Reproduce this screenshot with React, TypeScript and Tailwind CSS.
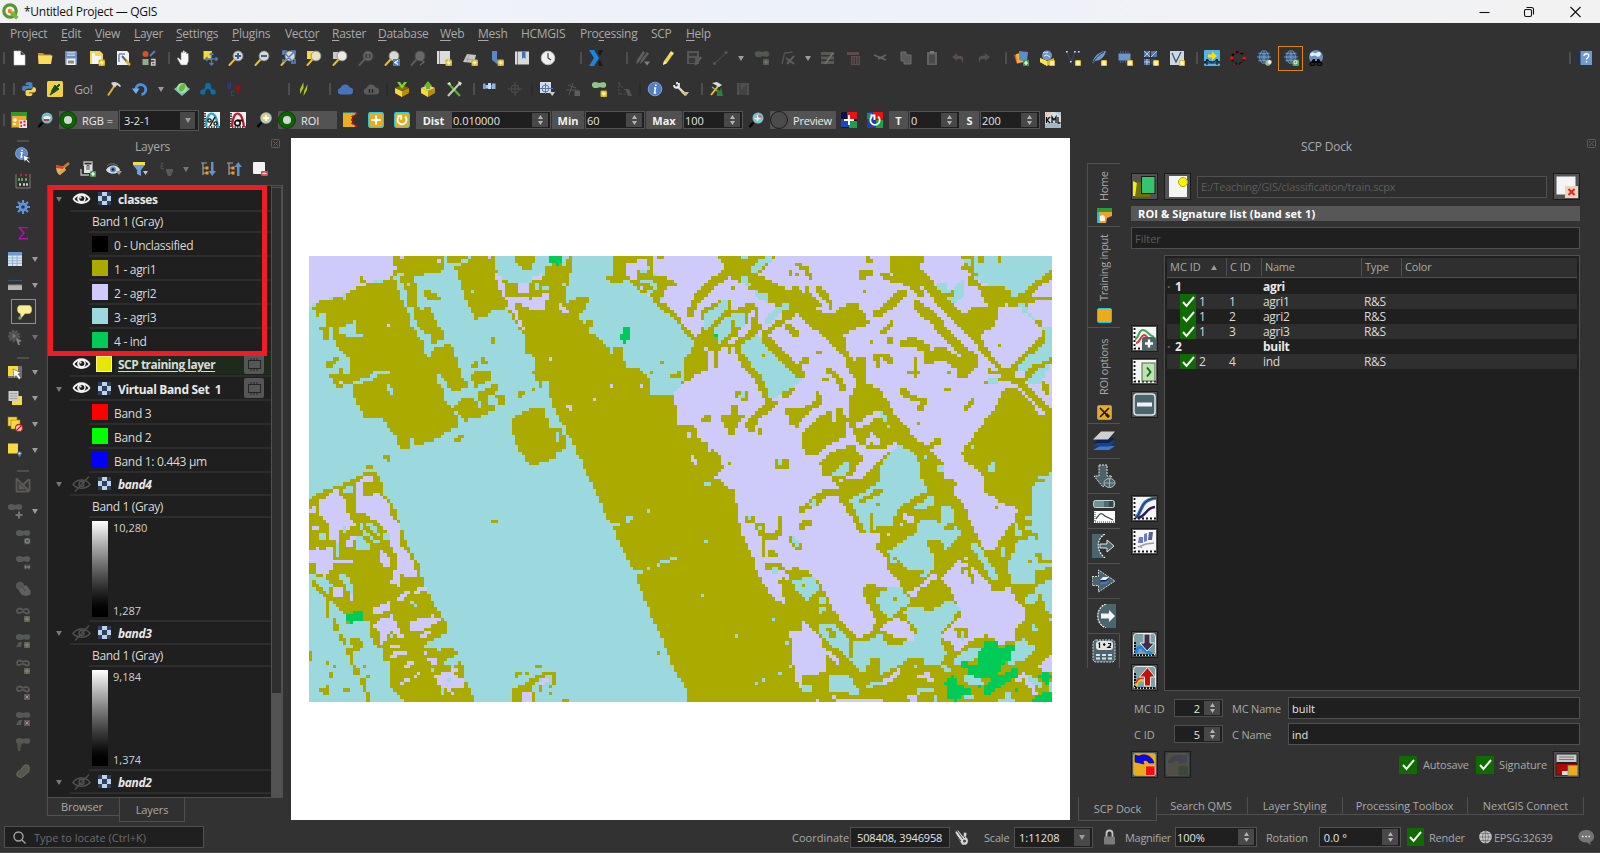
import React from 'react';

/* ------------------------------------------------------------------ */
/* Classified raster                                                   */
/* ------------------------------------------------------------------ */

type Ink = 'O' | 'L' | 'C' | 'G';
// [class, stroke width (0 = filled polygon), flat x y list]
type Shape = [Ink, number, string];
type Tile = { ox: number; oy: number; base: Ink; shapes: Shape[] };

const INK: Record<Ink, string> = { O: '#aaaa00', L: '#cecafa', C: '#9cd9df', G: '#00cb56' };
const COLS = 220;
const ROWS = 132;
const MAP_W = 743;
const MAP_H = 446;

const TILES: Tile[] = [
  {
    ox: 300, oy: 245, base: 'C',
    shapes: [
      ['L', 0, '27 33 278 33 292 70 265 103 230 103 210 115 175 125 130 150 60 165 27 190'],
      ['O', 0, '275 33 432 33 432 75 410 85 345 92 350 185 400 205 415 240 440 280 395 300 440 297 460 305 462 335 475 340 475 370 485 375 485 400 500 405 500 430 455 437 430 400 410 385 420 425 430 435 440 480 460 490 475 520 475 548 440 562 420 575 370 598 345 598 340 580 330 580 330 610 300 610 290 580 265 545 250 518 190 518 180 485 160 450 160 420 108 425 88 385 150 385 150 355 130 320 105 305 118 295 105 290 75 290 60 250 78 240 75 200 50 215 48 195 30 195 60 165 130 155 175 125 265 105 290 70'],
      ['L', 0, '302 33 312 33 312 42 302 42'],
      ['C', 0, '118 245 160 238 160 225 168 225 168 260 188 265 185 275 155 282 120 262'],
      ['C', 0, '105 345 135 330 150 350 150 385 95 380 88 365'],
      ['O', 12, '83 362 95 350 110 342'], ['O', 12, '122 372 125 385'],
      ['C', 12, '92 255 92 285'],
      ['C', 0, '280 90 308 85 300 105 312 115 325 180 340 190 350 240 375 265 390 258 395 300 435 290 435 300 400 310 390 335 372 330 370 295 335 240 325 200 300 150 290 125'],
      ['O', 10, '382 262 392 262'],
      ['C', 11, '165 413 210 400 235 382 265 382'],
      ['C', 11, '265 425 275 435 275 445'],
      ['O', 18, '378 145 395 155 418 160'], ['O', 12, '375 190 385 200'],
      ['C', 11, '325 118 325 122'],
      ['O', 0, '465 65 500 50 515 33 585 33 590 80 600 100 620 160 620 190 575 200 560 215 528 222 510 190 485 130'],
      ['O', 0, '442 33 505 33 500 52 442 52'],
      ['C', 11, '485 48 500 46'],
      ['O', 0, '598 95 630 112 690 112 735 88 740 65 815 33 815 85 805 95 798 170 815 190 835 200 840 225 855 235 870 265 890 270 920 300 930 330 945 305 970 305 970 330 980 365 1020 370 1050 400 1050 450 1140 450 1140 705 868 705 850 665 840 630 828 628 820 590 800 570 800 540 785 535 750 460 745 405 720 410 705 375 705 335 675 325 670 265 630 210 615 165'],
      ['L', 0, '583 85 600 90 615 120 620 155 690 160 745 145 735 190 690 200 690 185 650 190 655 225 665 225 672 255 660 250 640 210 620 190 620 170 595 130'],
      ['O', 12, '675 190 650 182'],
      ['O', 0, '637 33 705 33 705 50 690 72 665 68'],
      ['C', 0, '695 112 720 108 712 132'],
      ['C', 0, '722 130 748 120 740 140'],
      ['L', 0, '655 120 685 112 685 140 660 142'],
      ['L', 12, '705 100 725 90'],
      ['L', 12, '785 180 790 195 805 198'],
      ['C', 11, '792 118 792 120'], ['C', 11, '790 45 790 62'],
      ['G', 0, '748 33 787 33 785 45 770 62 748 52'],
      ['O', 0, '830 155 865 155 860 195 840 205 800 180'],
      ['O', 16, '870 232 860 240'],
      ['O', 0, '935 33 1060 33 1060 90 1130 120 1110 130 1080 160 1140 215 1140 240 1060 170 980 105 945 120 920 100 940 90'],
      ['L', 0, '980 55 1040 42 1035 70 1010 80 1015 110 980 95'],
      ['L', 0, '1060 33 1140 33 1140 215 1085 170 1090 135 1130 120 1060 80'],
      ['O', 12, '1080 40 1085 40'], ['O', 12, '1065 110 1080 95 1130 118'],
      ['C', 11, '1030 112 1065 115'], ['C', 11, '1030 80 1045 70'], ['C', 11, '1020 145 1060 170'], ['C', 11, '1045 142 1070 130'],
      ['L', 10, '1022 128 1024 128'], ['L', 10, '1045 145 1050 150'],
      ['G', 0, '976 246 990 246 990 275 978 296 968 292 960 270'],
      ['O', 12, '578 280 578 292'],
      ['O', 0, '515 385 560 373 573 380 570 408 525 427 513 400'],
      ['O', 12, '548 342 555 352'], ['O', 12, '520 362 530 354'],
      ['O', 0, '535 440 590 418 594 435 560 455 570 480 585 480 583 497 540 515 495 528 485 515 460 490 490 460 515 452 535 480'],
      ['C', 11, '538 475 538 485'],
      ['O', 0, '588 452 612 452 616 478 597 478'],
      ['O', 14, '660 450 668 443'], ['O', 14, '470 583 485 576'],
      ['O', 11, '255 635 265 637 265 645'], ['O', 11, '203 665 213 665'],
      ['O', 0, '160 705 175 692 195 682 232 682 240 705'],
      ['L', 11, '190 703 210 698 220 703'],
      ['O', 11, '702 382 712 395 722 405 722 422'], ['O', 11, '700 433 701 433'],
      ['O', 0, '638 520 690 490 735 490 748 545 785 550 785 570 797 575 797 605 770 625 760 640 730 655 690 660 665 625 645 595 638 560'],
      ['C', 10, '772 565 772 588'],
      ['L', 10, '265 241 266 241'], ['L', 10, '752 342 753 342'], ['L', 10, '934 423 935 423'], ['L', 10, '1025 423 1026 423'],
      ['L', 10, '883 463 884 463'], ['L', 10, '803 485 812 490'], ['L', 10, '123 412 124 412'], ['L', 10, '416 47 417 47'], ['L', 10, '568 37 569 37'],
      ['C', 10, '133 160 134 160'], ['C', 10, '517 140 518 140'],
      ['O', 12, '1085 352 1087 352'], ['O', 10, '1054 382 1055 382'],
      ['C', 0, '1050 395 1140 395 1140 430 1110 435 1110 450 1085 450 1075 440 1070 450 1050 450'],
      ['O', 14, '1120 393 1140 387'],
      ['L', 0, '1110 468 1125 465 1120 435 1140 430 1140 538 1132 538 1130 485'],
      ['O', 12, '180 95 190 108'],
    ],
  },
  {
    ox: 680, oy: 245, base: 'L',
    shapes: [
      ['O', 0, '115 33 285 33 235 90 310 125 400 185 445 210 500 180 530 175 555 205 568 235 490 270 505 320 520 345 555 335 555 415 600 430 640 500 680 545 700 575 750 610 790 660 790 705 725 705 715 650 660 600 600 615 540 600 505 540 505 470 520 430 535 410 510 380 490 330 450 290 400 250 350 200 310 215 290 185 230 145 190 115 130 85 135 70'],
      ['C', 12, '185 40 200 40'], ['C', 16, '222 75 245 55 265 45'], ['C', 12, '190 100 205 118'],
      ['O', 22, '135 85 60 150 30 200'],
      ['O', 0, '0 235 40 265 75 300 85 370 40 395 0 425'],
      ['C', 0, '0 250 40 285 38 310 10 350 15 400 0 410'],
      ['O', 0, '60 200 120 165 150 165 152 200 200 175 240 185 235 240 150 310 80 315 45 265 70 240'],
      ['C', 0, '75 210 125 168 145 168 152 260 120 295 105 270 75 250'],
      ['O', 13, '85 265 105 240 130 215 148 200'], ['C', 0, '155 210 190 203 195 240 165 245'],
      ['O', 14, '108 320 105 360'], ['O', 12, '148 310 148 320'],
      ['L', 11, '215 205 205 245 175 275 150 292'], ['L', 11, '50 215 60 260'],
      ['G', 11, '107 271 108 271'],
      ['C', 0, '225 138 270 152 265 172 235 165'], ['C', 16, '262 225 290 200 320 182'],
      ['O', 14, '255 265 340 205'],
      ['C', 0, '185 300 230 258 250 290 300 330 370 400 315 450 270 460 240 405 190 340'],
      ['O', 18, '172 315 185 340 240 410 265 470'], ['O', 18, '250 275 300 325 365 390'], ['O', 14, '175 300 235 247'],
      ['O', 13, '340 430 310 452'], ['O', 10, '250 330 251 330'], ['O', 14, '380 345 345 370'],
      ['O', 14, '320 240 350 270'],
      ['O', 13, '350 58 380 70 390 100'], ['O', 12, '330 80 330 92'], ['O', 12, '352 88 353 88'],
      ['O', 14, '345 135 375 165 400 190'], ['O', 14, '410 130 435 150 455 185'], ['O', 14, '380 150 420 182'], ['O', 12, '380 128 381 140'],
      ['O', 11, '158 128 159 128'], ['O', 11, '412 322 422 322'], ['O', 11, '554 138 555 138'], ['O', 11, '573 290 574 290'],
      ['O', 18, '545 95 550 85 575 80'], ['O', 12, '562 42 572 48'],
      ['O', 18, '605 88 640 103 690 115 720 145'],
      ['O', 0, '630 33 730 33 720 75 740 110 700 130 650 100 630 80'],
      ['O', 20, '670 140 640 170 590 210'],
      ['O', 25, '720 90 770 150 830 215 870 250 910 300 960 360 985 390'],
      ['O', 24, '710 180 760 220 800 270 850 320 885 345 845 385'],
      ['O', 24, '670 295 700 290 735 310'], ['O', 28, '750 340 780 320 830 352 870 360'],
      ['O', 11, '705 340 705 390'], ['O', 11, '685 382 715 382'],
      ['O', 18, '587 335 610 332 632 345'], ['O', 12, '593 350 593 365'], ['O', 12, '602 262 622 250 635 235'], ['O', 20, '628 286 630 286'],
      ['O', 10, '802 382 812 382'], ['O', 10, '802 38 808 38'],
      ['O', 0, '845 33 890 33 870 80 900 120 980 130 1000 165 955 190 945 240 900 270 840 240 860 200 895 180 870 150'],
      ['L', 0, '735 33 845 33 850 70 870 90 860 110 780 100 735 80'],
      ['C', 0, '852 45 900 33 1116 33 1116 75 1030 150 990 165 975 130 930 120 880 100'],
      ['O', 13, '875 40 880 65'], ['O', 12, '850 65 885 85'], ['O', 13, '960 38 960 50'], ['O', 13, '903 40 904 48'],
      ['L', 0, '862 120 900 130 920 180 895 180 865 160'],
      ['O', 16, '1116 85 1035 150 990 170'], ['O', 22, '915 145 985 150'],
      ['O', 18, '980 170 1030 175 1045 215 1080 245'],
      ['C', 14, '1025 180 1060 235'],
      ['C', 0, '770 120 795 115 810 135 850 105 855 145 830 180 790 155'],
      ['O', 12, '800 150 820 145'], ['O', 14, '1045 165 1116 158'],
      ['L', 0, '905 270 945 240 960 200 1010 185 1090 250 1080 290 1000 370 970 370 910 300'],
      ['O', 10, '958 300 959 300'],
      ['C', 0, '1090 250 1116 250 1116 340 1080 420 1040 420 1060 380 1000 370 1080 300'],
      ['O', 14, '1092 262 1085 290 1030 335 975 400'], ['O', 14, '1116 345 1060 370 1030 410'],
      ['O', 17, '985 390 1040 430 1116 515'], ['O', 15, '930 380 985 385'], ['O', 14, '1090 410 1100 445'], ['O', 14, '925 410 960 400'], ['C', 14, '935 408 948 408'],
      ['O', 0, '975 430 1010 430 1060 480 1075 510 1116 520 1116 705 920 705 850 640 845 620 920 520 950 480'],
      ['C', 18, '932 672 938 662'], ['C', 10, '877 605 878 605'], ['C', 14, '1085 700 1116 690'],
      ['O', 0, '520 600 548 640 520 690 480 705 430 690 420 650 450 620'],
      ['O', 0, '540 705 600 645 660 595 720 650 725 705'],
      ['C', 0, '600 705 605 650 650 602 690 610 720 660 715 705'],
      ['C', 0, '490 655 507 652 505 680 485 697 455 690'],
      ['O', 0, '365 570 385 540 450 495 480 490 505 520 495 575 440 605 415 628 378 628 368 600'],
      ['L', 12, '462 500 465 525'],
      ['C', 11, '735 635 736 635'], ['C', 16, '780 665 785 670'], ['C', 10, '604 503 614 523'], ['C', 10, '626 545 627 545'],
      ['O', 14, '445 375 470 395 490 430'], ['O', 11, '430 405 440 402'],
      ['O', 16, '412 445 420 475 385 490'], ['O', 0, '315 490 370 490 385 505 350 548 330 540'],
      ['O', 0, '190 535 230 495 275 465 300 475 240 520 215 565'], ['O', 12, '240 560 240 562'],
      ['O', 16, '165 490 165 500'], ['O', 0, '120 515 200 505 180 530 160 570 145 565'], ['O', 16, '72 525 85 515'],
      ['O', 28, '175 448 188 450'], ['C', 14, '182 455 190 445'],
      ['O', 0, '0 545 35 535 50 550 50 575 85 600 125 640 130 670 95 700 0 705'],
      ['L', 11, '35 632 48 655'], ['L', 12, '85 608 86 612'], ['O', 10, '148 655 149 655'], ['L', 11, '25 570 30 576'],
      ['O', 34, '305 656 308 656'], ['C', 12, '300 645 300 655'],
      ['O', 15, '665 435 700 460 735 470 715 495'], ['O', 10, '795 432 810 432'], ['O', 11, '878 465 857 490'],
      ['O', 13, '780 582 752 605'], ['O', 10, '715 535 716 535'],
      ['L', 16, '535 545 565 522 590 508'], ['L', 13, '562 595 575 570 590 590'], ['L', 13, '555 650 600 625 645 600'], ['L', 12, '515 575 525 595'],
    ],
  },
  {
    ox: 300, oy: 475, base: 'C',
    shapes: [
      ['O', 0, '862 0 1140 0 1140 610 1130 600 1090 500 1060 440 1010 310 1000 290 940 160 930 148 910 110 900 75'],
      ['C', 11, '938 148 956 148'], ['C', 11, '980 140 995 128'], ['C', 11, '1010 294 1025 290'], ['C', 10, '1045 281 1046 281'], ['C', 11, '1076 268 1100 258 1130 250'], ['C', 10, '1045 107 1046 107'],
      ['O', 0, '35 65 70 45 130 25 190 0 240 0 250 55 270 75 300 140 310 180 330 230 355 265 375 330 390 370 405 390 430 430 440 445 440 475 390 500 455 515 475 535 420 570 460 575 475 560 490 570 490 600 500 630 510 640 520 665 520 681 315 681 270 640 265 560 250 555 250 520 220 510 205 440 150 440 130 410 90 370 75 370 50 345 35 320 27 290 27 100'],
      ['L', 0, '58 80 110 42 135 80 150 130 165 150 140 165 115 165 115 200 90 195 85 150 60 120'],
      ['L', 0, '170 20 200 5 220 10 230 50 265 80 270 115 300 150 300 210 320 225 350 290 345 305 300 300 295 335 270 325 285 290 290 240 270 210 270 180 245 150 200 120 170 110'],
      ['O', 0, '190 22 230 22 230 50 210 65 185 62'],
      ['L', 0, '27 225 50 225 50 205 60 225 100 215 100 255 160 255 160 265 105 265 75 305 50 290 50 265 27 262'],
      ['L', 11, '42 158 50 158'], ['L', 11, '30 110 42 100'], ['L', 12, '145 210 160 190'], ['C', 14, '140 45 150 42'],
      ['L', 0, '240 225 270 250 268 282 245 265'],
      ['C', 0, '180 140 215 140 245 150 235 200 200 230 170 225 170 185 190 190'],
      ['O', 12, '195 152 215 175 232 190'], ['O', 12, '200 190 225 220'], ['O', 12, '228 150 238 165'],
      ['C', 20, '258 183 262 183'], ['C', 20, '67 183 69 183'], ['C', 12, '132 158 133 168'],
      ['C', 13, '125 300 145 320 155 365'], ['C', 12, '112 215 112 240'],
      ['C', 0, '28 298 75 305 95 330 88 360 60 335 50 330'],
      ['L', 24, '112 350 118 358'], ['L', 12, '155 372 165 362'],
      ['O', 12, '82 370 82 425'],
      ['O', 0, '160 230 240 232 275 300 270 370 220 400 205 440 150 405 160 360'],
      ['G', 0, '160 407 189 407 189 437 160 437 160 447 148 447 138 435 138 417 160 417'],
      ['L', 0, '240 225 270 250 268 282 245 265'],
      ['L', 0, '270 325 285 290 298 300 295 335'],
      ['L', 0, '220 400 265 378 270 405 235 420 220 415'],
      ['L', 0, '220 450 245 430 275 420 295 455 310 488 290 485 270 465 260 500 240 508 240 470'],
      ['C', 11, '274 483 275 483'],
      ['L', 0, '330 437 400 420 420 432 400 450 355 470 330 465'],
      ['L', 13, '365 482 388 473'], ['L', 11, '275 545 300 533 318 533'], ['L', 10, '280 515 298 515'], ['L', 11, '315 574 340 563'], ['L', 11, '303 625 325 613'], ['L', 10, '345 605 356 596'],
      ['L', 0, '375 528 385 545 412 550 410 572 380 560'],
      ['L', 0, '403 600 440 590 465 578 472 590 455 600 490 610 490 642 455 640 460 658 435 640 420 635'],
      ['C', 12, '448 615 449 615'], ['C', 12, '427 645 427 655'], ['C', 10, '335 383 345 390'], ['C', 10, '397 585 398 585'],
      ['L', 13, '295 372 320 355'], ['L', 14, '347 350 370 342'],
      ['C', 0, '360 510 400 500 440 480 460 512 420 525'],
      ['O', 15, '105 440 108 462'], ['O', 11, '140 440 145 445'], ['O', 13, '122 482 132 505'], ['O', 16, '160 495 178 512 148 530'], ['O', 12, '155 540 155 565'], ['O', 16, '165 580 175 595'], ['O', 14, '188 612 195 645'], ['O', 12, '204 652 204 681'],
      ['O', 11, '30 532 30 552'], ['O', 10, '82 563 83 563'], ['O', 10, '103 573 104 573'], ['O', 12, '92 595 92 605'], ['O', 10, '193 573 194 573'], ['O', 10, '203 604 204 604'], ['O', 11, '82 635 80 655 62 645'], ['O', 11, '133 645 146 645'],
      ['O', 10, '577 138 590 138'],
      ['O', 10, '710 573 722 573'], ['O', 14, '690 625 720 605 745 595 760 600 760 622'],
      ['O', 0, '636 640 655 645 655 632 690 620 700 640 705 681 636 681'],
      ['L', 0, '666 658 680 650 696 655 696 681 666 681'], ['L', 11, '722 623 745 613'], ['O', 12, '720 640 722 645'],
      ['O', 10, '650 603 660 595'], ['O', 10, '680 593 681 593'], ['O', 10, '750 633 751 633'], ['O', 10, '752 655 753 655'], ['O', 11, '790 677 805 677'], ['O', 10, '1075 533 1076 533'],
    ],
  },
  {
    ox: 680, oy: 475, base: 'O',
    shapes: [
      ['L', 0, '95 0 440 0 475 40 480 75 510 120 540 170 600 180 590 220 620 250 625 290 665 320 665 335 600 340 590 330 565 320 540 345 570 400 595 440 560 480 530 490 480 430 455 395 440 360 420 325 390 290 340 275 320 290 300 320 315 385 305 385 275 360 255 330 235 300 215 230 190 190 175 130 165 50'],
      ['O', 18, '370 100 400 85 440 48 470 50'], ['C', 12, '395 85 405 80'],
      ['O', 16, '300 130 300 165'], ['O', 16, '245 150 245 180 285 188 300 170'], ['O', 14, '250 190 250 240'], ['O', 15, '335 190 360 215'], ['C', 10, '342 190 352 212'],
      ['O', 16, '365 158 370 145 390 142'], ['O', 18, '262 275 310 280'], ['O', 26, '208 132 212 132'], ['C', 12, '207 128 208 128'], ['O', 13, '275 235 290 240'], ['O', 16, '235 155 240 165'],
      ['C', 10, '238 157 239 157'], ['L', 12, '305 292 320 310'],
      ['C', 0, '338 320 400 300 418 345 380 375 345 340'], ['O', 10, '370 330 371 330'],
      ['C', 20, '426 375 430 375'], ['C', 18, '282 285 286 287'], ['C', 12, '425 408 435 400'],
      ['O', 12, '428 8 455 10 475 20'], ['C', 12, '455 0 475 10'], ['L', 10, '485 15 500 5 525 0'],
      ['L', 0, '600 460 650 425 690 450 705 495 650 492 640 480 605 470'],
      ['L', 0, '665 340 700 345 770 290 770 310 715 345 710 375'],
      ['L', 0, '785 310 835 260 870 265 920 320 940 345 990 340 1010 380 1032 400 1032 440 1010 455 1000 500 960 505 920 480 870 500 830 530 815 510 780 480 800 460 850 420 820 360'],
      ['O', 11, '865 275 878 320'], ['O', 14, '845 285 860 280'], ['O', 30, '838 478 848 478'], ['C', 11, '848 470 848 488'], ['L', 11, '858 250 859 250'], ['L', 10, '822 470 828 482'],
      ['L', 0, '785 0 920 0 915 50 960 80 1015 105 1000 140 960 195 945 225 915 225 880 160 850 90 820 60 830 20'],
      ['O', 10, '948 97 949 97'],
      ['L', 0, '328 470 370 465 370 440 425 490 430 540 440 545 435 590 365 605 365 650 345 610 335 520'],
      ['L', 12, '430 525 455 540 475 565'], ['L', 10, '468 677 608 677'], ['L', 14, '685 667 708 672'], ['L', 10, '412 677 413 677'], ['L', 10, '460 665 462 665'],
      ['C', 0, '510 70 560 45 600 20 610 0 715 0 745 45 690 75 650 105 635 150 580 160 560 175 530 120'],
      ['O', 14, '512 55 550 40'], ['O', 12, '545 75 575 62 600 45'], ['O', 10, '592 88 594 88'], ['O', 12, '575 120 575 155'], ['O', 20, '535 25 590 10'],
      ['C', 0, '690 105 755 60 770 85 720 108'],
      ['C', 0, '640 220 710 170 720 130 780 140 785 95 820 100 820 140 845 180 800 225 775 195 740 200 765 250 765 285 690 285 640 240'],
      ['O', 16, '798 160 815 155'], ['C', 12, '725 300 750 288'], ['C', 12, '630 235 640 258'],
      ['L', 10, '665 148 666 148'], ['L', 10, '625 178 626 178'], ['L', 13, '675 122 692 137'],
      ['C', 0, '1116 12 1116 270 1095 280 1070 290 1065 325 1000 330 980 270 1000 230 1010 190 1000 170 1010 140 1060 120 1055 80 1060 30'],
      ['O', 14, '1020 130 1025 160 1070 185'], ['O', 14, '1050 145 1035 140'], ['O', 12, '1075 240 1085 255 1116 265'], ['O', 10, '1048 260 1049 260'], ['O', 16, '1010 192 1050 178'],
      ['C', 0, '1070 335 1116 310 1116 415 1095 410 1090 375 1030 390 1030 365 1070 355'], ['O', 11, '1078 360 1078 380'],
      ['C', 18, '885 215 910 250 945 310'], ['C', 12, '968 218 968 240'],
      ['C', 0, '600 345 665 335 690 380 650 415 630 430 600 400 590 380'], ['O', 11, '645 372 646 372'],
      ['C', 0, '670 405 720 395 740 415 800 378 825 380 840 405 820 430 780 470 780 500 800 530 780 570 730 570 730 545 700 545 640 580 600 600 600 550 570 550 550 600 510 560 480 530 410 470 420 445 470 450 510 500 560 500 600 475 620 510 700 500 710 460 680 430'],
      ['O', 16, '450 465 460 480'], ['O', 12, '513 505 513 540'], ['C', 11, '785 575 810 585'],
      ['C', 0, '447 598 510 598 520 625 550 655 520 657 447 650'],
      ['C', 0, '820 550 870 520 920 515 900 545 850 570 822 570'], ['C', 0, '1000 510 1030 490 1070 520 1040 550 985 575 990 540'],
      ['C', 0, '845 600 900 590 912 630 870 630'],
      ['G', 0, '920 500 945 498 960 515 1004 512 1004 528 990 530 990 555 975 560 950 605 900 610 865 600 865 575 890 565 890 545'],
      ['G', 0, '930 615 1000 580 1015 572 1013 605 970 630 935 655 912 658 912 640'],
      ['G', 0, '792 620 825 600 835 630 872 640 872 657 845 660 830 680 805 665 805 640'],
      ['G', 0, '1055 681 1060 670 1090 655 1116 650 1116 681'], ['G', 0, '1075 600 1105 590 1116 600 1105 630 1090 620'],
      ['G', 18, '848 572 856 566'], ['G', 11, '1010 645 1011 645'], ['G', 11, '1050 604 1051 604'], ['G', 11, '898 634 899 634'],
      ['L', 0, '1075 572 1116 540 1116 590 1090 590'], ['L', 12, '1015 615 1030 600 1065 655'], ['C', 14, '1050 610 1080 630'], ['C', 10, '1112 630 1112 645'],
      ['C', 13, '720 650 755 643'], ['C', 12, '765 667 770 677'], ['C', 12, '855 665 880 662'], ['L', 11, '715 607 740 598 755 615'], ['L', 11, '605 625 635 610 655 585'], ['C', 13, '565 632 600 625'], ['C', 18, '380 640 388 642'],
      ['C', 11, '78 27 92 27'], ['C', 10, '78 198 79 198'], ['C', 10, '67 361 68 361'], ['C', 10, '280 433 281 433'], ['C', 10, '169 483 170 483'], ['C', 10, '321 503 322 503'], ['C', 10, '331 573 332 573'], ['C', 10, '300 595 301 595'], ['C', 10, '250 615 251 615'], ['C', 10, '229 625 230 625'],
      ['C', 0, '0 608 12 630 22 650 22 681 0 681'], ['C', 10, '706 574 707 574'], ['C', 16, '983 660 986 664'], ['C', 11, '955 677 1000 677'], ['C', 14, '1058 452 1064 462'],
      ['C', 12, '1108 432 1116 432'],
    ],
  },
];

function hit(px: number, py: number, w: number, p: number[]): boolean {
  const n = p.length / 2;
  if (w === 0) {
    let inside = false;
    for (let i = 0, j = n - 1; i < n; j = i++) {
      const xi = p[2 * i], yi = p[2 * i + 1], xj = p[2 * j], yj = p[2 * j + 1];
      if (yi > py !== yj > py && px < ((xj - xi) * (py - yi)) / (yj - yi) + xi) inside = !inside;
    }
    return inside;
  }
  for (let i = 0; i + 1 < n; i++) {
    const ax = p[2 * i], ay = p[2 * i + 1];
    const dx = p[2 * i + 2] - ax, dy = p[2 * i + 3] - ay;
    const t = Math.max(0, Math.min(1, ((px - ax) * dx + (py - ay) * dy) / (dx * dx + dy * dy || 1)));
    if (Math.max(Math.abs(px - ax - t * dx), Math.abs(py - ay - t * dy)) <= w / 2) return true;
  }
  return false;
}

function rasterPaths(): [string, string][] {
  const out: Record<Ink, string> = { O: '', L: '', C: '', G: '' };
  const cw = MAP_W / COLS, ch = MAP_H / ROWS;
  const tiles = TILES.map((t) => ({ ...t, parsed: t.shapes.map((s) => ({ ink: s[0], w: s[1], p: s[2].split(' ').map(Number) })) }));
  for (let r = 0; r < ROWS; r++) {
    let start = 0;
    let cur: Ink | null = null;
    for (let c = 0; c <= COLS; c++) {
      let ink: Ink | null = null;
      if (c < COLS) {
        const x = 309 + (c + 0.5) * cw, y = 256 + (r + 0.5) * ch;
        const t = tiles[(x >= 680 ? 1 : 0) + (y >= 480 ? 2 : 0)];
        const px = (x - t.ox) * 3, py = (y - t.oy) * 3;
        ink = t.base;
        for (let k = t.parsed.length - 1; k >= 0; k--) {
          const s = t.parsed[k];
          if (hit(px, py, s.w, s.p)) { ink = s.ink; break; }
        }
      }
      if (ink !== cur) {
        if (cur) {
          const x0 = Math.round(start * cw), x1 = Math.round(c * cw), y0 = Math.round(r * ch), y1 = Math.round((r + 1) * ch);
          out[cur] += `M${x0} ${y0}H${x1}V${y1}H${x0}Z`;
        }
        cur = ink;
        start = c;
      }
    }
  }
  return (Object.keys(out) as Ink[]).map((k) => [INK[k], out[k]]);
}

const RASTER = rasterPaths();

function RasterMap() {
  return (
    <svg width={MAP_W} height={MAP_H} viewBox={`0 0 ${MAP_W} ${MAP_H}`} shapeRendering="crispEdges" className="block">
      {RASTER.map(([fill, d]) => <path key={fill} fill={fill} d={d} />)}
    </svg>
  );
}

/* ------------------------------------------------------------------ */
/* Icons                                                               */
/* ------------------------------------------------------------------ */

const star = (
  <g><rect x="9.500" y="9.500" width="6.500" height="6.500" rx="1" fill="#d8b41c" /><path d="M12.750 10.300v5M10.300 12.750h5M11.200 11.200l3.100 3.100M14.300 11.200l-3.100 3.100" stroke="#fff6c0" strokeWidth=".9" /></g>
);
const newBadge = <rect x="10.500" y="10.500" width="5" height="5" rx="1" fill="#fff3b8" stroke="#e0bb2c" strokeWidth="1.200" />;
const lens = (fill: string, glass = '#d9d9d4') => (
  <g><path d="M1.500 15L6.500 9.500" stroke={fill} strokeWidth="1.900" strokeLinecap="round" /><circle cx="10" cy="6" r="4.900" fill={glass} stroke="#8f8f8b" strokeWidth=".9" /></g>
);
const blob = (c: string) => <path d="M1 4.500C.5 1 4 .6 6.500 1.600s4-.6 6.500-.3c3.200.6 2.800 5 0 5.500-2.200.4-3.200-1-5.200-.3S1.500 8 1 4.500z" fill={c} />;
const chartBack = (
  <g><rect width="16" height="16" fill="#f2f2f2" /><path d="M1 1v14h15" stroke="#111" strokeWidth="1.600" strokeDasharray="1.400 1.100" fill="none" /></g>
);
const globe = (
  <g><circle cx="8" cy="7" r="6.800" fill="#1c4576" /><circle cx="8" cy="7" r="3.500" fill="#2f6db0" /><path d="M1.200 7h13.600M8 .2v13.600M2.500 3.300h11M2.500 10.700h11M7 .2c-4.500 4-4.500 9.600 0 13.600M9 .2c4.500 4 4.500 9.600 0 13.600" stroke="#a0a5a8" strokeWidth=".8" fill="none" /></g>
);

const ICONS: Record<string, React.ReactNode> = {
  file: <path d="M3 1h6.500L14 5v10H3z M9.500 1v4H14" fill="#fff" stroke="#c9c9c9" strokeWidth=".6" />,
  folder: <g><path d="M1 3h5l1.500 1.500H14V7H1z" fill="#c7951f" /><path d="M1 5.500h14.500l-1.500 8.500H1.500z" fill="#fbdc5c" /></g>,
  save: <g><rect x="2" y="1" width="12" height="14" rx="1" fill="#6c8fc0" /><rect x="4" y="2" width="8" height="4" fill="#b9cbe4" /><path d="M4 4h8" stroke="#6c8fc0" /><rect x="3.500" y="8.500" width="9" height="6.500" fill="#f1f1f1" /><rect x="5" y="10.500" width="6" height="3" fill="#8a8a8a" /></g>,
  newLayout: <g><path d="M1 1h10l3 3v10H1z" fill="#f2d45a" /><path d="M3 3h3v3h6v8H3z" fill="#f5f5f5" />{star}</g>,
  layoutMgr: <g><path d="M2 1h10l2 2v12H2z" fill="#f1f1f1" /><path d="M4 4h6M4 4v8" stroke="#6b8fc7" strokeWidth="1.500" /><path d="M7 6l7 8" stroke="#666" strokeWidth="2" /><path d="M11 11l4 4" stroke="#e0b326" strokeWidth="2.500" /></g>,
  style: <g><circle cx="4.500" cy="4" r="3" fill="#d4532a" /><path d="M9 6l5-5" stroke="#4e7db8" strokeWidth="1.800" /><rect x="1.500" y="9" width="6" height="6" fill="#8fae8a" /><path d="M10 9.500h4V15h-3.500v-2.500h3" stroke="#ccc" strokeWidth="1.300" fill="none" /></g>,
  hand: <path d="M5 15L1.500 9c-.5-1 .8-1.600 1.500-.7L5 10V3c0-1.200 1.600-1.200 1.800 0V1.500c.2-1.200 1.700-1.200 1.900 0V2.500c.3-1 1.700-1 1.900.2V4c.4-1 1.900-.8 1.900.4V11l-1.500 4z" fill="#f7f7f7" stroke="#777" strokeWidth=".5" />,
  panSel: <g><rect x="1.500" y="1" width="8.500" height="8.500" fill="#f5d935" /><path d="M9.500 3v12M3.500 9h12M7.500 5l2-2 2 2M7.500 13l2 2 2-2M5.500 7l-2 2 2 2M13.500 7l2 2-2 2" stroke="#4d79b5" strokeWidth="1.400" fill="none" /></g>,
  zoomIn: <g>{lens('#e5bf3a')}<path d="M10 3v6M7 6h6" stroke="#2c5c9e" strokeWidth="1.900" /></g>,
  zoomOut: <g>{lens('#e5bf3a')}<path d="M7 6h6" stroke="#2c5c9e" strokeWidth="1.900" /></g>,
  zoomFull: <g>{lens('#e5bf3a')}<path d="M3 1l10 11M15 1L4 12M3 5V1h4M11 1h4v4M15 9v4h-4M3 9v3" stroke="#5b86c0" strokeWidth="1.600" fill="none" /></g>,
  zoomSel: <g><rect x="1" y="1" width="7" height="8" fill="#f5d935" />{lens('#e5bf3a', '#e6e2c2')}</g>,
  zoomLayer: <g><rect x="1" y="2" width="7" height="7" fill="#c9c9c9" />{lens('#e5bf3a', '#eceae2')}</g>,
  zoomNat: <g opacity=".3">{lens('#bbb')}<path d="M8 4v4M12 4v4M10 4.500v.8M10 7v.8" stroke="#111" /></g>,
  zoomLast: <g>{lens('#e5bf3a')}<rect x="9" y="9" width="7" height="7" fill="#4f7fbc" /><path d="M14 10.500l-3 2 3 2" stroke="#fff" strokeWidth="1.300" fill="none" /></g>,
  zoomNext: <g opacity=".32">{lens('#bbb')}<path d="M10 9l4 3-4 3" stroke="#ddd" strokeWidth="1.300" fill="none" /></g>,
  newMap: <g><path d="M1 1h2v13H1zM3.500 1H14v13H3.500z" fill="#dcdcdc" />{star}</g>,
  new3d: <g><path d="M1 12l4-8 9 1-2 8z" fill="#c5c5c5" /><path d="M3 9l10 1M7 4l-2 8" stroke="#8e8e8e" strokeWidth=".6" />{star}</g>,
  bookmarkNew: <g><path d="M4 1h5v8l3 3-3 2-5-4z" fill="#5b87c2" />{star}</g>,
  bookmark: <g><path d="M1 1.500h2v13H1zM3.500 1.500H15v13H3.500z" fill="#d9d9d9" /><path d="M8 1.500h3.500V9L9.700 7.500 8 9z" fill="#3f73b6" /></g>,
  clock: <g><circle cx="8" cy="8" r="6.800" fill="#efefef" stroke="#bcbcbc" /><path d="M8 3v5l3 2" stroke="#444" strokeWidth="1.200" fill="none" /></g>,
  xlogo: <g><path d="M1 0h5l5 8-5 8H1l5-8z" fill="#1d83dd" /><path d="M11 0h4l-3 6-2-3zM10 13l2-3 3 6h-4z" fill="#17191c" /></g>,
  editsDim: <g opacity=".38"><path d="M2 14l1-4L9 1l2 1.500L5 12zM6 14l1-4 6-8 2 1.500-6 8z" fill="#aaa" /><path d="M10 11.500h6l-3 4z" fill="#fff" /></g>,
  pencil: <g><path d="M3 15l1-4 7-10 3 2-7 10z" fill="#f0d34a" /><path d="M3 15l1-4 3 2z" fill="#f2e9c8" /><path d="M10 2.500l3 2" stroke="#e8e4d2" strokeWidth="1.500" /></g>,
  saveDim: <g opacity=".4"><rect x="1" y="1" width="12" height="13" fill="#8a8a8a" /><path d="M3 3h8v3H3zM3 8h6v5H3z" fill="#444" /><path d="M9 15l6-8" stroke="#999" strokeWidth="2.500" /></g>,
  lineDim: <g opacity=".45"><path d="M3 13L14 3" stroke="#777" /><circle cx="2.500" cy="13.500" r="1.500" fill="#888" /><circle cx="14" cy="2.500" r="1.500" fill="#888" /></g>,
  blobDim: <g opacity=".42">{blob('#7c8c7c')}<path d="M9 9h6v6H9z" fill="#8a8a70" /><path d="M12 9.500v5M9.500 12h5" stroke="#ddd" /></g>,
  vertexDim: <g opacity=".42"><path d="M2 14L4.500 3l8-1" stroke="#888" strokeWidth="1.300" fill="none" /><path d="M6 8l8 6M14 6l-7 8" stroke="#999" strokeWidth="2" /></g>,
  tableDim: <g opacity=".45"><path d="M1 2h13v3H1zM1 6.500h13v3H1zM1 11h13v3H1z" fill="#8c8c78" /><path d="M5 14L13 3" stroke="#bbb" strokeWidth="1.800" /></g>,
  trashDim: <g opacity=".38"><path d="M1 2h12v3H1zM5 6h9v9H5z" fill="#a07878" /><path d="M7 7v7M9.500 7v7M12 7v7" stroke="#333" /></g>,
  cutDim: <g opacity=".5"><path d="M2 5l12 5M6 9l8-4" stroke="#999" strokeWidth="1.500" /></g>,
  copyDim: <path d="M3 2h5v3h5v9H6v-3H3z" fill="#5a5a5a" stroke="#6e6e6e" />,
  pasteDim: <g><rect x="3" y="2" width="10" height="13" fill="#626262" /><rect x="5" y="4.500" width="6" height="9" fill="#4a4a4a" /><rect x="6" y="1" width="4" height="2.500" fill="#777" /></g>,
  undoDim: <path d="M2 7l5-4v2.500c6-.5 8 3 5 8 1-4-1-5-5-4.500V11z" fill="#5a4c48" />,
  redoDim: <path d="M14 7L9 3v2.500c-6-.5-8 3-5 8-1-4 1-5 5-4.500V11z" fill="#4c554c" />,
  dataMgr: <g><path d="M1 5l6-2 3 9-6 2z" fill="#e0562c" /><path d="M3 4l7-1 1 9-7 1z" fill="#f0b62e" /><path d="M6 1l9 1-1 10-8-2z" fill="#5f8dc8" /><rect x="10" y="10" width="6" height="6" rx="1" fill="#3f9a52" /><path d="M13 11v4M11 13h4" stroke="#fff" strokeWidth="1.200" /></g>,
  geopkg: <g><circle cx="8" cy="5.500" r="5" fill="#6f97c8" /><path d="M4 3c2-2 3 1 5-1M5 6l3-1 3 2" stroke="#dfe9f4" fill="none" /><path d="M1 8l7 3 7-3v4l-7 4-7-4z" fill="#e2bb22" /><path d="M1 8l7 3v5l-7-4z" fill="#fbe15c" />{newBadge}</g>,
  shape: <g><path d="M2 2l4 10 4-10h4" stroke="#3e5270" fill="none" strokeWidth=".8" /><path d="M1 1h1.600v1.600H1zM9 1h1.600v1.600H9zM13 1h1.600v1.600H13zM5 11h1.600v1.600H5z" fill="#cfe0f2" />{newBadge}</g>,
  quill: <g><path d="M1 15C2 8 6 2 15 1c-1 3-2 6-5 8-2 1.500-5 1.500-6 2z" fill="#6f9ccc" /><path d="M1 15C3 10 7 5 13 2" stroke="#23364d" fill="none" />{newBadge}</g>,
  memory: <g><path d="M3.500 3V1M6 3V1M8.500 3V1M11 3V1M3.500 11v2M6 11v2M8.500 11v2" stroke="#3e618c" /><rect x="1.500" y="3.500" width="12" height="7" fill="#6d97cb" />{newBadge}</g>,
  mesh: <g><path d="M1 1h6v6H1zM8 1h6v6H8zM1 9h6v6H1z" fill="#4e74a8" /><path d="M1 1l6 6M7 1L1 7M8 7l6-6M1 12h6M4 9v6" stroke="#cfe0f2" strokeWidth=".8" /><rect x="8" y="9" width="5" height="5" fill="#30486c" />{newBadge}</g>,
  virtual: <g><rect x="1" y="1" width="14" height="14" fill="#ccd8e4" /><path d="M3 3l4 9 5-10" stroke="#3d4f66" strokeWidth="1.200" fill="none" />{newBadge}</g>,
  bridge: <g><rect width="16" height="16" rx="1" fill="#56b3ea" /><path d="M0 13h16M3 9v6M13 9v6M0 12c2 0 3-1 3-3 2 4 8 4 10 0 0 2 1 3 3 3" stroke="#102030" strokeWidth="1.200" fill="none" /><path d="M4 4.500h4V1.500L13 6l-5 4.500v-3H4z" fill="#ffe100" /></g>,
  dots: <g><circle cx="8" cy="8" r="6" fill="none" stroke="#0c0c0c" strokeWidth="2" strokeDasharray="3 2" /><circle cx="1.800" cy="8" r="1.800" fill="#e11" /><circle cx="14.200" cy="8" r="1.800" fill="#e11" /><path d="M4 2h1.500M10.500 2H12M4 14h1.500M10.500 14H12" stroke="#c11" strokeWidth="1.600" /></g>,
  globeAdd: <g>{globe}<circle cx="12" cy="13" r="2.800" fill="#8fc28a" /><circle cx="13.700" cy="12" r="2" fill="#e8e8e8" /></g>,
  globeSearch: <g>{globe}<rect x="9.500" y="9.500" width="6.500" height="6.500" rx="1" fill="#5fa060" /><circle cx="12.500" cy="12.300" r="1.600" fill="none" stroke="#fff" /></g>,
  globeBino: <g><circle cx="8" cy="7" r="7" fill="#6a91bd" /><path d="M2 4c3-4 4 0 6-1s4-2 5 1c-1 2-2 4-5 2S3 9 2 4z" fill="#e7f0f8" /><path d="M5 9h2v2h2V9h2l3 4.500H2z" fill="#050505" /><ellipse cx="4.500" cy="14" rx="2.600" ry="1.800" fill="#222" stroke="#000" /><ellipse cx="11.500" cy="14" rx="2.600" ry="1.800" fill="#222" stroke="#000" /></g>,
  help: <g><rect x="1" y="1" width="2.500" height="14" fill="#1d3453" /><rect x="3.500" y="1" width="11.500" height="14" fill="#6b9bd1" /><path d="M7 6c0-3 5-3 4.800 0-.2 1.500-2.300 1.500-2.300 3.500M9.500 11v1.500" stroke="#fff" strokeWidth="1.400" fill="none" /></g>,
  python: <g><path d="M8 1c3 0 3.500 1 3.500 2.500V6c0 1-.7 1.800-1.800 1.800H6.300C5 7.800 4.300 9 4.300 10H3C1.500 10 1 8.800 1 7.500S1.500 4.800 3 4.800h5V4H4.500C4.500 2 5 1 8 1z" fill="#4b83bd" /><path d="M8 15.200c-3 0-3.500-1-3.500-2.500v-2c0-1 .7-1.800 1.800-1.800h3.400c1.300 0 2-1.200 2-2.700H13c1.500 0 2 1.300 2 2.600s-.5 2.700-2 2.700H8v.8h3.500c0 2-.5 2.900-3.500 2.900z" fill="#fbd34a" /></g>,
  plug: <g><rect width="16" height="16" rx="1.500" fill="#f2cf43" /><path d="M4 13l1-4 3-5 1.500 1.500L12 3l1 1-2.500 2.500L12 8l-5 3.500z" fill="#174f1c" stroke="#174f1c" /><path d="M3 14l3-3" stroke="#174f1c" strokeWidth="1.500" /></g>,
  hammer: <g><path d="M2 14.500L9 4" stroke="#e4ad2c" strokeWidth="2" /><path d="M5 2c3-2 7-1 10 3l-1 1-3-2-2 2.500-2-1.500z" fill="#d4d4d4" /></g>,
  reload: <g><path d="M4 10A5 5 0 1 1 9.500 13.500" stroke="#4c90e0" strokeWidth="2.800" fill="none" /><path d="M0 7.500h7.500L4 13z" fill="#6db0f5" /></g>,
  leaf: <g><path d="M8 2l8 6-8 7-8-7z" fill="#6fc6c6" /><circle cx="8" cy="7" r="5" fill="#b4e08b" /><path d="M4.500 9C5 4 8 2.500 11.500 2.500 12 8 9 11 6 10.500z" fill="#5fbb4d" /></g>,
  molecule: <g fill="#0e6fa6"><circle cx="2.800" cy="11" r="2.600" /><circle cx="8" cy="5" r="3" /><circle cx="13.200" cy="11" r="2.600" /><path d="M3 11l5-6 5 6" stroke="#0e6fa6" strokeWidth="2.400" fill="none" /></g>,
  acro: <g><path d="M4.500 4.500H2V7h2.500V2H1.500" stroke="#2b3f95" strokeWidth="1.100" fill="none" /><path d="M8.500 10.500H5.500v4h3" stroke="#2b3f95" strokeWidth="1.200" fill="none" /><circle cx="12" cy="7" r="2.800" fill="#8e1414" /><path d="M12 9v4" stroke="#8e1414" strokeWidth="1.500" /></g>,
  slashes: <path d="M7.500 1L4 8v5l3.500-6zM11.500 3L8 10l-.5 5L11 9z" fill="#a9c32b" />,
  cloud: <path d="M3.500 13.500a3.300 3.300 0 0 1 0-6.500A5 5 0 0 1 12.800 6.500a3.500 3.500 0 0 1-.3 7z" fill="#4672bd" />,
  cloudDim: <g><path d="M3.500 13.500a3.300 3.300 0 0 1 0-6.500A5 5 0 0 1 12.800 6.500a3.500 3.500 0 0 1-.3 7z" fill="#5b5b5b" /><path d="M6.500 12V8M9.500 8v4" stroke="#222" strokeWidth="1.300" /></g>,
  boxDown: <g><path d="M1 7l7 3 7-3v5l-7 4-7-4z" fill="#b78e0c" /><path d="M1 7l7 3v6l-7-4z" fill="#f6d93a" /><path d="M1 7l7-3 7 3-7 3z" fill="#8a6a06" /><path d="M3 1h3l2 3 2-3h3L8 8z" fill="#7fd331" /></g>,
  boxUp: <g><path d="M1 7l7 3 7-3v5l-7 4-7-4z" fill="#b78e0c" /><path d="M1 7l7 3v6l-7-4z" fill="#f6d93a" /><path d="M1 7l7-3 7 3-7 3z" fill="#e9d468" /><path d="M8 0l4 5-2 0v3H6V5H4z" fill="#68b92a" /></g>,
  wrenchX: <g><path d="M2 2l12 13" stroke="#58b62c" strokeWidth="2.200" /><path d="M14 2L2 15" stroke="#b9cfae" strokeWidth="2.200" /><path d="M1 3l3-2 1 3zM12 0l4 2-2 3z" fill="#e4efdf" /></g>,
  screwH: <g><rect x="2" y="2.500" width="2.500" height="5.500" fill="#7ba4d4" /><rect x="4.500" y="4" width="6" height="3.500" fill="#a8c6e8" /><rect x="7" y="2" width="3" height="6" fill="#c8dcf2" /><rect x="11" y="2.500" width="3.500" height="5.500" fill="#8fb4de" /></g>,
  crossDim: <path d="M8 1v14M1 8h14M8 4a4 4 0 1 0 0 8 4 4 0 0 0 0-8z" stroke="#4e4e4e" strokeWidth="1" fill="none" />,
  target: <g><rect x="1" y="1" width="11" height="11" fill="#d7dde5" /><path d="M6.500 2v11M1 7.500h13M10 7.500a3.500 3.500 0 1 1-7 0 3.500 3.500 0 0 1 7 0z" stroke="#4b7cb4" fill="none" /><path d="M10.500 11H16l-2.800 4z" fill="#ccc" /></g>,
  nodeDim: <g opacity=".42"><path d="M1 9h11M8 2L4 14M3 4l8 3" stroke="#8b8b8b" fill="none" /><rect x="9.500" y="9.500" width="5.500" height="5.500" fill="#999" /></g>,
  blobNew: <g>{blob('#8fc58a')}{star}</g>,
  nodesDim2: <g opacity=".42"><path d="M2 1v13M2 3l9 9M3 13h8" stroke="#888" strokeDasharray="2 1.500" /><path d="M8 8h4l3 7h-4z" fill="#8b8370" /></g>,
  info: <g><circle cx="8" cy="8" r="6.800" fill="#4d80c4" stroke="#90b4e2" strokeWidth=".8" /><path d="M8.800 3.500v1.500M7 7h1.500l-1 5h1.700" stroke="#fff" strokeWidth="1.500" fill="none" /></g>,
  wrench: <g><path d="M4 5l7 7" stroke="#dedede" strokeWidth="2.400" /><path d="M1 4c0 3 4 4 5 1L6 2M4 3.500V1" fill="none" stroke="#eee" strokeWidth="1.800" /><path d="M9 9l5 4-2 2-4-4z" fill="#ecd35c" /><path d="M10 11h6l-3 4z" fill="#bbb" /></g>,
  grass: <g><path d="M2 14L10 4" stroke="#e6c02d" strokeWidth="2" /><path d="M3 2l5-1 5 3-3 2z" fill="#dcdcdc" /><path d="M8 15V8l3 2 1-4 2 9z" fill="#2f7f3e" /><path d="M3 6l5 4" stroke="#8fbf5a" strokeWidth="1.500" /></g>,
  mapDim: <g opacity=".5"><path d="M2 2h12v12H2z" fill="#6e6e6e" /><path d="M5 2v12M7 8v6M9 6v8M11 4v10" stroke="#3c3c3c" /></g>,
  scpGrid: <g><rect width="16" height="16" fill="#2f9a2f" /><rect x="1" y="4" width="14" height="11" fill="#efa92c" /><path d="M2 8h4M4 6v4M2 12h3" stroke="#fff" strokeWidth="1.400" /><path d="M8 8h8v8H8z" fill="#f6dede" /><path d="M9 9.500h2v2H9zM12.500 12h2v2h-2zM12.500 8.500h2v2h-2zM9.500 13h1.500v2H9.500z" fill="#d23" /></g>,
  scpLens: <g><path d="M1.500 15l4-4.500" stroke="#050505" strokeWidth="2.600" /><circle cx="10" cy="6" r="5.500" fill="#6fbfc4" /><path d="M6 5.500c2-2 6-2 8 0-2 3-6 3-8 0z" fill="#e3f1f0" /><path d="M7 8h5" stroke="#c83a3a" strokeWidth="2" /></g>,
  scpLensAdd: <g><path d="M1.500 15l4-4.500" stroke="#050505" strokeWidth="2.600" /><circle cx="10" cy="6" r="5" fill="#f1c36b" stroke="#9fd0cf" strokeWidth="1.500" /><path d="M10 3v6M7 6h6" stroke="#fff" strokeWidth="1.800" /></g>,
  scpLensMulti: <g><path d="M1.500 15l4-4.500" stroke="#050505" strokeWidth="2.600" /><circle cx="10" cy="6" r="5.500" fill="#7cc4cb" /><path d="M10 3v3H7z" fill="#4ca65c" /><circle cx="12" cy="4.500" r="1.800" fill="#d86a6a" /><path d="M9.500 3v6M6.500 6.500h6" stroke="#e6f3f4" strokeWidth="1.400" /></g>,
  pct: <g>{chartBack}<path d="M2 15C3-3 12-3 14 15" stroke="#2ca5c8" strokeWidth="2.200" fill="none" /><path d="M6 14l5-9" stroke="#111" strokeWidth="1.500" /><circle cx="5.500" cy="8.500" r="1.700" fill="none" stroke="#111" strokeWidth="1.200" /><circle cx="11.500" cy="11.500" r="1.700" fill="none" stroke="#111" strokeWidth="1.200" /></g>,
  sigma: <g>{chartBack}<path d="M2 15C3-3 12-3 14 15" stroke="#c21c2c" strokeWidth="2.200" fill="none" /><path d="M12.500 8.500H7" stroke="#111" strokeWidth="1.800" /><circle cx="7.500" cy="11" r="2.700" fill="none" stroke="#111" strokeWidth="1.700" /></g>,
  roiPoly: <g><path d="M1 1h14l-5 4v6l5 4H1z" fill="#ecaf1c" /><path d="M15 1l-5 4v6l5 4" stroke="#c11" strokeWidth="1.800" strokeDasharray="2.500 1.500" fill="none" /><path d="M1 1h13" stroke="#25cfe8" strokeWidth="1" /></g>,
  roiAdd: <g><rect x=".7" y=".7" width="14.600" height="14.600" rx="1.500" fill="#eaac1a" stroke="#25d0ea" strokeWidth="1.200" /><path d="M8 3.500v9M3.500 8h9" stroke="#fff" strokeWidth="2" /></g>,
  roiRedo: <g><rect x=".7" y=".7" width="14.600" height="14.600" rx="1.500" fill="#eaac1a" stroke="#25d0ea" strokeWidth="1.200" /><path d="M11 4.500a4.500 4.500 0 1 1-6 0M3.500 3.800h3.700v4" stroke="#fff" strokeWidth="1.800" fill="none" /></g>,
  rgbAdd: <g><rect width="16" height="16" rx="1.500" fill="#101040" /><rect x="6" width="10" height="7" fill="#e11" /><rect y="7" width="8" height="8" fill="#1649c8" /><rect x="8" y="9" width="8" height="7" fill="#1ba04a" /><path d="M8 3v10M3 8h10" stroke="#fff" strokeWidth="2" /></g>,
  rgbRedo: <g><rect width="16" height="16" rx="1.500" fill="#1b3fae" /><rect x="6" width="10" height="7" fill="#e11" /><rect y="1" width="5" height="6" fill="#1b8f5a" /><rect x="9" y="8" width="7" height="8" fill="#1ba04a" /><path d="M11 4.500a4.700 4.700 0 1 1-6 0M3.500 3.500h4V8" stroke="#fff" strokeWidth="1.800" fill="none" /></g>,
  kml: <g><rect width="16" height="16" fill="#d8dde0" /><path d="M0 0h7L0 6z" fill="#e8c9b5" /><path d="M0 12l8-2 8 3v3H0z" fill="#9fb9c9" /><path d="M10 0h6v4z" fill="#a8c8e0" /><path d="M1.500 5v6M5 5L2 8l3 3M7 11V5l2 3 2-3v6M13 5v6h2.500" stroke="#111" strokeWidth="1.300" fill="none" /></g>,
  identify: <g><circle cx="6.500" cy="6.500" r="6" fill="#5b8bcb" stroke="#9dbde4" strokeWidth=".7" /><path d="M7 2.800v1.300M5.600 5.600H7L6.200 10h1.300" stroke="#fff" strokeWidth="1.400" fill="none" /><path d="M8 8l7 3-3 1 3 3.500-1 .5-3-3L9.500 15z" fill="#fff" stroke="#333" strokeWidth=".5" /></g>,
  abacus: <g><path d="M1 1v14M15 1v14M1 15h14" stroke="#7c7c7c" strokeWidth="1" fill="none" /><path d="M5 2h2M10 2h2" stroke="#d62222" strokeWidth="2.600" /><path d="M3 6.500h2M6 6.500h2M10 6.500h2" stroke="#61b86a" strokeWidth="2.600" /><path d="M4 11.500h2M8 11.500h2M11 11.500h2" stroke="#c9c9c9" strokeWidth="2.600" /></g>,
  gear: <g><path d="M8 1v14M1 8h14M3 3l10 10M13 3L3 13" stroke="#5f93d8" strokeWidth="2.200" /><circle cx="8" cy="8" r="4.500" fill="#5f93d8" /><circle cx="8" cy="8" r="1.800" fill="#26394f" /></g>,
  sum: <path d="M3.500 2h9v2.500l-.8-1.300H6L10 8l-4.500 5h6.500l1-1.500V14.500H3.500V13.500L8 8 3.500 3z" fill="#b80fb4" />,
  table: <g><rect x="1" y="1" width="14" height="14" fill="#d9e5f2" /><rect x="1" y="1" width="14" height="3.500" fill="#6d9ad0" /><path d="M1 7h14M1 9.700h14M1 12.300h14M5.500 4v11M10 4v11" stroke="#8eaed2" strokeWidth=".9" /></g>,
  ruler: <g><path d="M1 3.500h14" stroke="#3a4f6f" strokeWidth="1.200" /><rect x="1" y="8" width="14" height="5" fill="#b5b5b5" /><path d="M1 8h14" stroke="#8a8a8a" /></g>,
  tip: <g><path d="M4 1.500h9c3.500 0 3.500 8 0 8H9L5 14l-.5-4.500C.5 9.500.5 1.500 4 1.500z" fill="#fbef96" stroke="#e0cd53" strokeWidth=".6" /><circle cx="4" cy="14" r="1.800" fill="#6ba36f" /></g>,
  runDim: <g opacity=".5"><circle cx="7" cy="7" r="5" fill="#6e6e6e" stroke="#7a7a7a" strokeWidth="2.500" strokeDasharray="2 1.500" /><path d="M5.500 4.500l4 2.500-4 2.500z" fill="#bbb" /><path d="M9 9l6 3-3 1 1 3-2 0z" fill="#ddd" /></g>,
  select: <g><rect x="1" y="2" width="14" height="12" fill="#8c8c8c" opacity=".7" /><rect x="1" y="2" width="10" height="10" fill="#f8d93e" /><path d="M6 5l8 4-3 1 3 4-2 1.500-3-4-2 2z" fill="#fff" stroke="#444" strokeWidth=".5" /></g>,
  selectForm: <g><rect x="5" y="6" width="10" height="9" fill="#f8d93e" /><rect x="1.500" y="1" width="10" height="10" fill="#cdcdcd" /><path d="M3 3.500h7M3 6h7M3 8.500h7" stroke="#a0a0a0" strokeWidth="1" /></g>,
  deselect: <g><rect x="1" y="1" width="9" height="9" fill="#f8d93e" stroke="#8e7a15" strokeWidth=".6" /><rect x="4" y="4" width="9" height="9" fill="#f8d93e" stroke="#8e7a15" strokeWidth=".6" /><circle cx="12" cy="12" r="3.500" fill="#f0d7d7" stroke="#c81e1e" strokeWidth="1.300" /><path d="M10 14l4-4" stroke="#c81e1e" strokeWidth="1.300" /></g>,
  selectLoc: <g><rect x="1" y="1.500" width="10" height="10" fill="#f8d93e" /><path d="M12.500 15.500c-4-5-2-6 0-6s4 1 0 6z" fill="#4f7391" /><circle cx="12.500" cy="11.500" r="1" fill="#fff" /></g>,
  triDim: <path d="M1.500 1v13.500H14M2 2l12.500 12.500M14.500 2v12M14 2L8 8M4.500 8v3.500h4z" stroke="#5d5955" strokeWidth="1.800" fill="none" />,
  bMove: <g opacity=".9">{blob('#5c605c')}<path d="M12 8.500v7M8.500 12h7" stroke="#7d7d7d" strokeWidth="2" /></g>,
  bRot: <g opacity=".9">{blob('#5c605c')}<rect x="9" y="9" width="6.500" height="6.500" fill="#454b4b" /><circle cx="12.300" cy="12" r="2" fill="none" stroke="#8d8d8d" strokeWidth="1.400" /></g>,
  bScale: <g opacity=".9">{blob('#5c605c')}<rect x="9" y="9.500" width="6.500" height="5" fill="#454b4b" /><path d="M9.500 12h5.500M10.500 10.500v3M14 10.500v3" stroke="#8d8d8d" strokeWidth="1.200" /></g>,
  bSimp: <g><circle cx="5" cy="5" r="4.200" fill="#555855" /><path d="M5 7l6-3 4.500 5.500v4L11 15l-4-1-3-4z" fill="#5e615e" /><path d="M6 5l5 5" stroke="#3c3c3c" strokeWidth=".8" /></g>,
  bRingAdd: <g opacity=".85"><path d="M2 4C2 1 5 1 7 2.500c2 1 3-1 5-.5s3 4 .5 4.500S9 4 7 5 2 7 2 4z" fill="none" stroke="#5f625f" strokeWidth="1.800" /><rect x="9" y="9" width="6" height="6" fill="#6c6a52" /><path d="M12 9.500v5M9.500 12h5" stroke="#999" /></g>,
  bPartAdd: <g opacity=".85">{blob('#5c605c')}<path d="M1 14l3-5h3l-1 5z" fill="#5c605c" /><rect x="9" y="9" width="6" height="6" fill="#6c6a52" /><path d="M12 9.500v5M9.500 12h5" stroke="#999" /></g>,
  bRingDel: <g opacity=".85"><path d="M2 4C2 1 5 1 7 2.500c2 1 3-1 5-.5s3 4 .5 4.500S9 4 7 5 2 7 2 4z" fill="none" stroke="#5f625f" strokeWidth="1.800" /><rect x="9" y="9" width="6" height="6" fill="#6b5a60" /><path d="M10.500 10.500l3 3M13.500 10.500l-3 3" stroke="#aaa" /></g>,
  bPartDel: <g opacity=".85">{blob('#5c605c')}<path d="M1 14l3-5h3l-1 5z" fill="#5c605c" /><rect x="9" y="9" width="6" height="6" fill="#6b5a60" /><path d="M10.500 10.500l3 3M13.500 10.500l-3 3" stroke="#aaa" /></g>,
  bReshape: <g opacity=".85">{blob('#5c605c')}<path d="M2 6h5l-2 8H3z" fill="#5b5846" /></g>,
  bOffset: <path d="M4 14c-4-2-2-6 2-7 2-3 3-6 6-5s3 6 0 8-4 6-8 4z" fill="#565650" stroke="#66664f" strokeWidth="1.200" />,
  brush: <g><path d="M9 7l6-5" stroke="#c9812e" strokeWidth="2.500" /><path d="M2 4l8 2 2 3-6 5c-3-1-4-5-4-10z" fill="#e8b84c" /><path d="M2 4l8 2-1 2-7-1z" fill="#d8402b" /><path d="M4 11l6-3 2 1-6 5z" fill="#d9a066" /></g>,
  groupAdd: <g><path d="M4 5V1h8v10M1 8v6h8" stroke="#bdbdbd" strokeWidth="1.300" fill="none" /><rect x="4" y="3.500" width="8" height="8.500" fill="#e2e2e2" /><path d="M7 9V4.500h2V9" stroke="#555" fill="none" /><rect x="10" y="10" width="6" height="6" rx="1" fill="#4b9b58" /><path d="M13 11v4M11 13h4" stroke="#fff" strokeWidth="1.200" /></g>,
  eyeBlue: <g><path d="M0 9c3-6 12-6 14 0-3 5-11 5-14 0z" fill="#ddd" /><circle cx="7" cy="8.500" r="3" fill="#5b8fc9" /><circle cx="7" cy="8.500" r="1.300" fill="#123" /><path d="M1 5c3-3 8-3 11 0" stroke="#777" fill="none" /><path d="M10 10h6l-3 4z" fill="#9a9a9a" /></g>,
  filter: <g><path d="M1 1h12v3H1z" fill="#f3dc4b" /><path d="M1 4h12L9 9v6l-4-2V9z" fill="#6d9fd8" /><path d="M11 10h5l-2.500 4z" fill="#c6c6c6" /></g>,
  exprDim: <g><path d="M6 2.500C3 1.500 2 4.500 5 5 2 5.500 2 8.500 6 7.500" stroke="#4c4c4c" strokeWidth="1.300" fill="none" /><path d="M8 8h7v2l-2 5h-3l-2-5z" fill="#595959" /></g>,
  expand: <g><path d="M1 2h6M3 2v12M3 7h4M3 12h4" stroke="#a0a0a0" strokeWidth="1.200" fill="none" /><path d="M5.500 5.500h3v3h-3zM5.500 10.500h3v3h-3z" fill="#f09c22" /><path d="M11 1h2.500v9H16l-3.800 5L8.500 10H11z" fill="#5e92cf" /></g>,
  collapse: <g><path d="M1 2h6M3 2v12M3 7h4M3 12h4" stroke="#a0a0a0" strokeWidth="1.200" fill="none" /><path d="M5.500 5.500h3v3h-3zM5.500 10.500h3v3h-3z" fill="#f09c22" /><path d="M11 15h2.500V6H16l-3.800-5L8.500 6H11z" fill="#5e92cf" /></g>,
  removeLayer: <g><rect x="1" y="1" width="12" height="12" rx="1" fill="#f2f2f2" /><rect x="9" y="10" width="7" height="5" rx="1" fill="#d8494c" /><path d="M10.500 12.500h4" stroke="#fff" strokeWidth="1.300" /></g>,
  coord: <g><path d="M1 3l3-2 5 6 1-4 3 1-1 4c3 2 3 6 0 8H8L4 9z" fill="#d8d8d8" stroke="#333" strokeWidth=".6" /><path d="M3 2l6 8M5 1l6 8M2 6l5 6" stroke="#333" strokeWidth=".9" /><circle cx="10.500" cy="12" r="1.500" fill="#444" /></g>,
};

function Ic({ n, s = 16 }: { n: string; s?: number }) {
  return <svg width={s} height={s} viewBox="0 0 16 16" fill="none" className="block shrink-0">{ICONS[n]}</svg>;
}

function Tb({ n }: { n: string }) {
  return <div className="flex h-[26px] w-[26px] shrink-0 items-center justify-center"><Ic n={n} /></div>;
}
function Tbs({ names }: { names: string }) {
  return <>{names.split(' ').map((n) => <Tb key={n} n={n} />)}</>;
}
function Sep({ className = 'w-[9px]', dim = false }: { className?: string; dim?: boolean }) {
  return (
    <div className={`flex h-[12px] shrink-0 justify-end pr-px ${className}`}>
      <div className={dim ? 'w-[2px] bg-[#2a2a2a]' : 'w-[2px] bg-[#4e4e4e]'} />
    </div>
  );
}
function Down({ className = '', color = '#9b9b9b' }: { className?: string; color?: string }) {
  return (
    <div className={`flex shrink-0 items-center justify-center ${className}`}>
      <svg width="6" height="5" viewBox="0 0 6 5"><path d="M0 0h6L3 5z" fill={color} /></svg>
    </div>
  );
}
function Spin() {
  return (
    <div className="flex w-[16px] shrink-0 flex-col items-center justify-center gap-[2px] bg-[#484848]">
      <svg width="5" height="4" viewBox="0 0 5 4"><path d="M2.500 0L5 4H0z" fill="#b4b4b4" /></svg>
      <svg width="5" height="4" viewBox="0 0 5 4"><path d="M0 0h5L2.500 4z" fill="#b4b4b4" /></svg>
    </div>
  );
}
function Field({ value, className }: { value: string; className: string }) {
  return (
    <div className={`flex shrink-0 border border-[#535353] bg-[#1f1f1f] py-px pr-[2px] pl-px text-[#e4e4e4] ${className}`}>
      <span className="flex flex-1 items-center pt-px whitespace-pre">{value}</span>
      <Spin />
    </div>
  );
}
function Tag({ children, className }: { children: React.ReactNode; className: string }) {
  return <div className={`flex h-[18px] shrink-0 items-center justify-center bg-[#505050] pt-px font-bold text-[#f2f2f2] ${className}`}>{children}</div>;
}
function Check({ className = 'h-[18px] w-[18px]' }: { className?: string }) {
  return (
    <div className={`flex shrink-0 items-center justify-center bg-[#0f6b00] ${className}`}>
      <svg width="13" height="12" viewBox="0 0 13 12"><path d="M1 6l3.500 4L12 1" stroke="#f4f4f4" strokeWidth="2" fill="none" /></svg>
    </div>
  );
}
function CloseBox() {
  return (
    <svg width="9" height="9" viewBox="0 0 9 9" fill="none" stroke="#5d5d5d"><rect x=".5" y=".5" width="8" height="8" rx="1" /><path d="M2 2l5 5M7 2L2 7" /></svg>
  );
}

/* ------------------------------------------------------------------ */
/* Title, menu and toolbars                                            */
/* ------------------------------------------------------------------ */

function TitleBar() {
  return (
    <header className="flex h-[23px] items-center bg-gradient-to-r from-[#f1f2f3] via-[#edf1fa] to-[#f2f2f2] text-[12px] text-[#111]">
      <svg width="17" height="17" viewBox="0 0 17 17" className="ml-[2px]">
        <circle cx="8" cy="8" r="6.200" fill="none" stroke="#589632" strokeWidth="3.200" /><path d="M8 8l4 .5 4.500 5.500-2.500 2.500-5.500-5z" fill="#7cb342" /><circle cx="8" cy="8" r="2.200" fill="#ee7913" /><path d="M7 6l3 1 .5 3z" fill="#f0c419" />
      </svg>
      <span className="ml-[5px] pt-px tracking-[-0.28px]">*Untitled Project — QGIS</span>
      <svg width="110" height="12" viewBox="0 0 110 12" className="mr-[18px] ml-auto" fill="none" stroke="#111" strokeWidth="1.100">
        <path d="M7.500 6.500h10" /><rect x="52.500" y="3.500" width="7" height="7" rx="1.500" /><path d="M54.500 1.500h5a2 2 0 0 1 2 2v5" /><path d="M98.500 1l10 10M108.500 1l-10 10" />
      </svg>
    </header>
  );
}

const MENU: [string, string, string, string][] = [
  ['Project', '', '', 'w-[51px]'], ['', 'E', 'dit', 'w-[34px]'], ['', 'V', 'iew', 'w-[39px]'], ['', 'L', 'ayer', 'w-[42px]'],
  ['', 'S', 'ettings', 'w-[56px]'], ['', 'P', 'lugins', 'w-[53px]'], ['Vect', 'o', 'r', 'w-[47px]'], ['', 'R', 'aster', 'w-[46px]'],
  ['', 'D', 'atabase', 'w-[62px]'], ['', 'W', 'eb', 'w-[38px]'], ['', 'M', 'esh', 'w-[43px]'], ['HCMGIS', '', '', 'w-[59px]'],
  ['Pro', 'c', 'essing', 'w-[71px]'], ['SCP', '', '', 'w-[35px]'], ['', 'H', 'elp', 'w-[40px]'],
];

function MenuBar() {
  return (
    <nav className="flex h-[20px] items-center pt-[2px] pl-[10px] text-[12px] tracking-[-0.28px] text-[#a9a9a9]">
      {MENU.map(([a, u, b, w]) => (
        <span key={a + u + b} className={`shrink-0 whitespace-nowrap ${w}`}>{a}<span className="underline underline-offset-2">{u}</span>{b}</span>
      ))}
    </nav>
  );
}

function Toolbars() {
  return (
    <div>
      <div className="flex h-[30px] items-center">
        <Sep className="w-[6px]" /><Tbs names="file folder save newLayout layoutMgr style" />
        <Sep /><Tbs names="hand panSel zoomIn zoomOut zoomFull zoomSel zoomLayer zoomNat zoomLast zoomNext newMap new3d bookmarkNew bookmark clock" />
        <Sep className="w-[22px]" /><Tb n="xlogo" />
        <Sep className="w-[20px]" /><Tbs names="editsDim pencil saveDim lineDim" />
        <Down className="w-[16px]" /><Tbs names="blobDim vertexDim" /><Down className="w-[14px]" />
        <Tbs names="tableDim trashDim cutDim copyDim pasteDim undoDim redoDim" />
        <Sep className="w-[11px]" /><Tbs names="dataMgr geopkg shape quill memory mesh virtual" />
        <Sep /><Tbs names="bridge dots globeAdd" />
        <div className="ml-px flex h-[25px] w-[25px] items-center justify-center border border-[#d98216]"><Ic n="globeSearch" /></div>
        <Tb n="globeBino" />
        <Sep className="ml-auto w-[9px]" /><div className="mr-[2px]"><Tb n="help" /></div>
      </div>
      <div className="flex h-[32px] items-center">
        <Sep className="w-[6px]" /><Sep className="w-[10px]" /><Tbs names="python plug" />
        <span className="w-[33px] pt-px pr-[2px] text-center text-[12px] tracking-[-0.2px] text-[#a9a9a9]">Go!</span>
        <Tbs names="hammer reload" /><Down className="w-[16px]" /><Tbs names="leaf molecule acro" />
        <Sep className="w-[44px]" /><Tb n="slashes" /><Sep className="w-[15px]" /><Tbs names="cloud cloudDim" />
        <Sep dim className="w-[5px]" /><Tbs names="boxDown boxUp wrenchX" />
        <Sep /><Tbs names="screwH crossDim" /><Sep dim className="w-[6px]" /><Tbs names="target nodeDim blobNew nodesDim2" />
        <Sep dim className="w-[4px]" /><Tbs names="info wrench" /><Sep className="w-[10px]" /><Tbs names="grass mapDim" />
      </div>
      <div className="flex h-[30px] items-center text-[11px]">
        <Sep className="w-[6px]" /><Tbs names="scpGrid scpLens" />
        <div className="ml-px flex h-[18px] w-[59px] shrink-0 items-center bg-[#535353] text-[#ececec]">
          <svg width="18" height="18" viewBox="0 0 18 18" className="shrink-0"><circle cx="9" cy="9" r="8.500" fill="#0c6400" stroke="#153a0d" /><circle cx="9" cy="9" r="4" fill="#d6d6d6" /></svg>
          <span className="ml-[5px] pt-px whitespace-nowrap">RGB =</span>
        </div>
        <div className="ml-px flex h-[21px] w-[80px] shrink-0 border border-[#535353] bg-[#1f1f1f] py-px pr-[3px] pl-px text-[#e4e4e4]">
          <span className="flex flex-1 items-center pt-px pl-[3px]">3-2-1</span><Down className="w-[15px] bg-[#484848]" />
        </div>
        <Tbs names="pct sigma scpLensAdd" />
        <div className="ml-px flex h-[18px] w-[59px] shrink-0 items-center bg-[#535353] text-[#ececec]">
          <svg width="18" height="18" viewBox="0 0 18 18" className="shrink-0"><circle cx="9" cy="9" r="8.500" fill="#0c6400" stroke="#153a0d" /><circle cx="9" cy="9" r="4" fill="#d6d6d6" /></svg>
          <span className="ml-[5px] pt-px">ROI</span>
        </div>
        <Tbs names="roiPoly roiAdd roiRedo" />
        <Tag className="ml-px w-[35px]">Dist</Tag><Field value="0.010000" className="h-[18px] w-[100px]" />
        <Tag className="ml-px w-[32px]">Min</Tag><Field value="60" className="ml-px h-[18px] w-[60px]" />
        <Tag className="ml-px w-[36px]">Max</Tag><Field value="100" className="ml-px h-[18px] w-[60px]" />
        <Tb n="scpLensMulti" />
        <div className="ml-px flex h-[18px] w-[66px] shrink-0 items-center bg-[#535353] text-[#ececec]">
          <svg width="18" height="18" viewBox="0 0 18 18" className="shrink-0"><circle cx="9" cy="9" r="8.500" fill="#4b4b4b" stroke="#1d1d1d" /></svg>
          <span className="ml-[5px] pt-px tracking-[-0.2px]">Preview</span>
        </div>
        <Tbs names="rgbAdd rgbRedo" />
        <Tag className="ml-px w-[19px]">T</Tag><Field value="0" className="ml-px h-[18px] w-[51px]" />
        <Tag className="w-[19px]">S</Tag><Field value="200" className="ml-px h-[18px] w-[60px]" />
        <Tb n="kml" />
      </div>
    </div>
  );
}

/* ------------------------------------------------------------------ */
/* Left toolbar                                                        */
/* ------------------------------------------------------------------ */

function SideTool({ n, menu = false, dim = false }: { n: string; menu?: boolean; dim?: boolean }) {
  if (!menu) return <div className="flex h-[26px] items-center pl-[15px]"><Ic n={n} /></div>;
  return (
    <div className="flex h-[26px] items-center pl-[7px]">
      <Ic n={n} /><Down className="ml-[9px] w-[6px]" color={dim ? '#6f6f6f' : '#9b9b9b'} />
    </div>
  );
}

const DIGITIZE = ['bRot', 'bScale', 'bSimp', 'bRingAdd', 'bPartAdd', 'bRingAdd', 'bRingDel', 'bPartDel', 'bReshape', 'bOffset'];

function SideToolbar() {
  return (
    <aside className="w-[46px] shrink-0 pt-[5px]">
      <div className="ml-[17px] h-[2px] w-[12px] bg-[#4e4e4e]" />
      <SideTool n="identify" /><SideTool n="abacus" /><SideTool n="gear" /><SideTool n="sum" />
      <SideTool n="table" menu /><SideTool n="ruler" menu />
      <div className="mt-px ml-[11px] flex h-[25px] w-[25px] items-center justify-center border border-[#d98216]"><Ic n="tip" /></div>
      <SideTool n="runDim" menu dim />
      <div className="mt-[7px] ml-[17px] h-[2px] w-[12px] bg-[#4e4e4e]" />
      <SideTool n="select" menu /><SideTool n="selectForm" menu /><SideTool n="deselect" menu /><SideTool n="selectLoc" menu />
      <div className="mt-[7px] ml-[17px] h-[2px] w-[12px] bg-[#4e4e4e]" />
      <SideTool n="triDim" /><SideTool n="bMove" menu />
      {DIGITIZE.map((n, i) => <SideTool key={i} n={n} />)}
    </aside>
  );
}

/* ------------------------------------------------------------------ */
/* Layers panel                                                        */
/* ------------------------------------------------------------------ */

function Eye({ off = false }: { off?: boolean }) {
  return off ? (
    <svg width="19" height="16" viewBox="0 0 19 16" fill="none" stroke="#505050" strokeWidth="1.400" className="shrink-0"><path d="M1 8.500c4-6 13-6 17 0-4 5-13 5-17 0z" /><circle cx="9.500" cy="8" r="2.500" /><path d="M3 15.500L17 .5" /></svg>
  ) : (
    <svg width="19" height="14" viewBox="0 0 19 14" className="shrink-0"><path d="M.5 7C4-.8 15-.8 18.500 7 15 13.500 4 13.500 .5 7z" fill="#f3f3f3" /><path d="M2.500 7C5 2.500 14 2.500 16.500 7 14 11 5 11 2.500 7z" fill="#1d1d1d" /><circle cx="9.500" cy="6.500" r="4.300" fill="#f3f3f3" /><circle cx="9.800" cy="6.500" r="2.500" fill="#1d1d1d" /><circle cx="8.600" cy="5.500" r="1" fill="#f3f3f3" /></svg>
  );
}

function RasterIcon() {
  return (
    <svg width="13" height="13" viewBox="0 0 13 13" shapeRendering="crispEdges" className="shrink-0"><rect width="13" height="13" fill="#2f4058" /><path d="M4 0h5v4H4zM0 4h4v5H0zM9 4h4v5H9zM4 9h5v4H4z" fill="#b9d3ee" /></svg>
  );
}

function Chip() {
  return (
    <div className="mr-[7px] ml-auto flex h-[20px] w-[20px] shrink-0 items-center justify-center rounded-[2px] bg-[#565656]">
      <svg width="15" height="13" viewBox="0 0 15 13" fill="none" stroke="#262626"><rect x="1.500" y="2.500" width="12" height="8" /><path d="M4 0v2.500M7 0v2.500M10 0v2.500M4 10.500V13M7 10.500V13M10 10.500V13" /></svg>
    </div>
  );
}

function GroupRow({ name, h, off = false, italic = false, chip = false }: { name: string; h: string; off?: boolean; italic?: boolean; chip?: boolean }) {
  return (
    <div className={`flex shrink-0 items-stretch ${h}`}>
      <Down className="w-[22px]" color="#777" />
      <div className="flex flex-1 items-center border-b-2 border-[#2d2d2d] pl-[2px]">
        <Eye off={off} /><span className="w-[7px]" /><RasterIcon />
        <span className={`ml-[7px] pt-[3px] font-bold tracking-[-0.35px] whitespace-pre text-[#e9e9e9] ${italic ? 'italic' : ''}`}>{name}</span>
        {chip && <Chip />}
      </div>
    </div>
  );
}

function LeafRow({ color, name, h = 'h-[24px]' }: { color?: string; name: string; h?: string }) {
  return (
    <div className={`ml-[41px] flex shrink-0 items-center border-b-2 border-[#2d2d2d] pl-[3px] ${h}`}>
      {color && <span className={`mr-[6px] h-[16px] w-[16px] ${color}`} />}
      <span className={color ? 'pt-[3px] tracking-[-0.3px]' : 'pt-px tracking-[-0.35px]'}>{name}</span>
    </div>
  );
}

function Ramp({ hi, lo }: { hi: string; lo: string }) {
  return (
    <div className="ml-[41px] flex h-[104px] shrink-0 border-b-2 border-[#2d2d2d] pt-[3px] pb-[3px] pl-[3px] text-[11px] text-[#d0d0d0]">
      <div className="h-[96px] w-[16px] bg-gradient-to-b from-white to-black" />
      <div className="ml-[5px] flex h-[96px] flex-col justify-between leading-[13px]"><span>{hi}</span><span>{lo}</span></div>
    </div>
  );
}

function LayersPanel() {
  return (
    <section className="relative flex w-[245px] shrink-0 flex-col pl-px">
      <div className="flex h-[22px] items-center pr-[11px] pl-[88px] text-[12px] tracking-[-0.2px] text-[#a9a9a9]"><span className="pt-px">Layers</span><div className="mb-[6px] ml-auto"><CloseBox /></div></div>
      <div className="flex h-[25px] items-center pb-px pl-[2px]">
        <Tbs names="brush groupAdd eyeBlue filter exprDim" /><Down className="w-[14px]" color="#777" /><div className="w-[2px]" /><Tbs names="expand collapse removeLayer" />
      </div>
      <div className="mt-[3px] flex h-[613px] w-[236px] shrink-0 border border-[#505050] bg-[#1f1f1f] text-[12px] text-[#dadada]">
        <div className="flex w-[223px] flex-col overflow-hidden pt-px">
          <GroupRow name="classes" h="h-[25px]" />
          <LeafRow name="Band 1 (Gray)" h="h-[21px]" />
          <LeafRow color="bg-black" name="0 - Unclassified" />
          <LeafRow color="bg-[#aaaa00]" name="1 - agri1" />
          <LeafRow color="bg-[#cecafa]" name="2 - agri2" />
          <LeafRow color="bg-[#9cd9df]" name="3 - agri3" />
          <LeafRow color="bg-[#00cb56]" name="4 - ind" />
          <div className="flex h-[24px] shrink-0 pl-[22px]">
            <div className="flex flex-1 items-center border-b-2 border-[#2d2d2d] pl-[2px]">
              <Eye /><span className="ml-[5px] h-[16px] w-[16px] border border-[#f6f68c] bg-[#e6e600]" />
              <div className="ml-[3px] flex h-[20px] flex-1 items-center bg-[#1e2a1b] pl-[3px]">
                <span className="pt-[2px] font-bold tracking-[-0.5px] whitespace-nowrap text-[#d9d9d9] underline underline-offset-2">SCP training layer</span><Chip />
              </div>
            </div>
          </div>
          <GroupRow name="Virtual Band Set  1" h="h-[24px]" chip />
          <LeafRow color="bg-[#ff0000]" name="Band 3" />
          <LeafRow color="bg-[#00ff00]" name="Band 2" />
          <LeafRow color="bg-[#0000ff]" name="Band 1: 0.443 µm" />
          <GroupRow name="band4" h="h-[23px]" off italic />
          <LeafRow name="Band 1 (Gray)" h="h-[22px]" />
          <Ramp hi="10,280" lo="1,287" />
          <GroupRow name="band3" h="h-[23px]" off italic />
          <LeafRow name="Band 1 (Gray)" h="h-[22px]" />
          <Ramp hi="9,184" lo="1,374" />
          <GroupRow name="band2" h="h-[23px]" off italic />
        </div>
        <div className="flex flex-1 flex-col border-x border-[#505050] bg-[#2f2f2f] pt-px">
          <div className="flex-1 border-t border-[#505050]" /><div className="h-[104px] bg-[#535353]" />
        </div>
      </div>
      <div className="flex h-[24px] text-[11px] tracking-[-0.1px] text-[#a9a9a9]">
        <div className="flex h-[18px] w-[72px] items-center justify-center border-b border-l border-[#505050] pr-[3px]">Browser</div>
        <div className="flex h-[24px] w-[66px] items-center justify-center border-x border-b border-[#505050] bg-[#303030]">Layers</div>
      </div>
      <div className="absolute top-[50px] left-[2px] h-[171px] w-[219px] border-[5px] border-[#ee1c24]" />
    </section>
  );
}

/* ------------------------------------------------------------------ */
/* SCP dock                                                            */
/* ------------------------------------------------------------------ */

function DockTab({ label, h, children }: { label?: string; h: string; children: React.ReactNode }) {
  return (
    <div className={`flex w-[33px] shrink-0 flex-col items-center justify-end border-t border-l border-[#505050] ${h} ${label ? 'pb-[3px]' : 'pb-[5px]'}`}>
      {label && <span className="flex min-h-0 flex-1 rotate-180 items-center justify-center text-[11px] tracking-[-0.35px] whitespace-nowrap text-[#a9a9a9] [writing-mode:vertical-rl]">{label}</span>}
      {children}
    </div>
  );
}

function SqBtn({ children, dim = false }: { children: React.ReactNode; dim?: boolean }) {
  return (
    <div className={`flex h-[27px] w-[27px] shrink-0 items-center justify-center border border-[#1c1c1c] ${dim ? 'bg-[#3a3a3a]' : 'bg-[#525252]'}`}>
      <svg width="23" height="23" viewBox="0 0 23 23" fill="none">{children}</svg>
    </div>
  );
}

const bigChart = <g><rect width="23" height="23" fill="#f5f5f5" /><path d="M1.500 1v20.500H23" stroke="#111" strokeWidth="1.800" strokeDasharray="2 2" fill="none" /></g>;

type Row = { group?: boolean; mc: string; c?: string; name: string; stripe?: boolean };
const SIGNATURES: Row[] = [
  { group: true, mc: '1', name: 'agri' },
  { mc: '1', c: '1', name: 'agri1', stripe: true },
  { mc: '1', c: '2', name: 'agri2' },
  { mc: '1', c: '3', name: 'agri3', stripe: true },
  { group: true, mc: '2', name: 'built' },
  { mc: '2', c: '4', name: 'ind', stripe: true },
];

function SignatureTable() {
  return (
    <div className="flex h-[436px] w-[416px] flex-col border border-[#505050] bg-[#1f1f1f] p-[2px] text-[12px] text-[#dadada]">
      <div className="flex h-[20px] shrink-0 border-b border-[#505050] bg-[#2f2f2f] pb-px text-[11px] text-[#a9a9a9]">
        <div className="flex w-[60px] items-center border-r border-[#505050] pl-[3px]">MC ID<svg width="6" height="5" viewBox="0 0 6 5" className="mr-[9px] ml-auto"><path d="M3 0l3 5H0z" fill="#9b9b9b" /></svg></div>
        <div className="flex w-[35px] items-center border-r border-[#505050] pl-[3px] whitespace-nowrap">C ID</div>
        <div className="flex w-[100px] items-center border-r border-[#505050] pl-[3px] tracking-[-0.3px]">Name</div>
        <div className="flex w-[40px] items-center border-r border-[#505050] pl-[3px] tracking-[-0.2px]">Type</div>
        <div className="flex items-center pl-[3px] tracking-[-0.2px]">Color</div>
      </div>
      <div className="pt-px">
        {SIGNATURES.map((r, i) => (
          <div key={i} className={`flex h-[15px] items-center leading-[15px] tracking-[-0.3px] ${r.stripe ? 'bg-[#2f2f2f]' : ''}`}>
            {r.group ? (
              <div className="flex w-[96px] font-bold text-[#e9e9e9]"><span className="w-[8px] text-[#666]">·</span>{r.mc}</div>
            ) : (
              <div className="flex w-[96px] items-center"><span className="w-[13px]" /><Check className="h-[15px] w-[16px]" /><span className="w-[33px] pl-[3px]">{r.mc}</span><span>{r.c}</span></div>
            )}
            <span className={r.group ? 'w-[101px] font-bold text-[#e9e9e9]' : 'w-[101px]'}>{r.name}</span>
            <span>{r.group ? '' : 'R&S'}</span>
          </div>
        ))}
      </div>
    </div>
  );
}

function IdRow({ label, value, nameLabel, name }: { label: string; value: string; nameLabel: string; name: string }) {
  return (
    <div className="flex h-[22px] items-center text-[11px] text-[#a9a9a9]">
      <span className="w-[43px] pt-px pl-[3px]">{label}</span>
      <div className="flex h-[18px] w-[49px] border border-[#505050] bg-[#1f1f1f] py-px pr-[2px] pl-px text-[#e4e4e4]"><span className="flex flex-1 items-center justify-end pt-px pr-[4px]">{value}</span><Spin /></div>
      <span className="w-[65px] pt-px pl-[9px] tracking-[-0.2px]">{nameLabel}</span>
      <div className="flex h-[22px] flex-1 items-center border border-[#505050] bg-[#1f1f1f] pt-px pl-[3px] text-[#e4e4e4]">{name}</div>
    </div>
  );
}

function DockTabs() {
  return (
    <div className="flex w-[33px] shrink-0 flex-col">
      <DockTab label="Home" h="h-[63px]"><svg width="15" height="15" viewBox="0 0 15 15" className="shrink-0"><rect width="15" height="5" fill="#2f9a2f" /><path d="M0 4h15v4l-5 2-1 5H0z" fill="#efa22c" /><rect y="4" width="2" height="11" fill="#27b7c9" /><path d="M3 13V8l3-1 2 2v4z" fill="#fff6e8" /></svg></DockTab>
      <DockTab label="Training input" h="h-[101px]"><div className="mb-px h-[15px] w-[15px] shrink-0 rounded-[2px] border border-[#25c5da] bg-[#eaac1a]" /></DockTab>
      <DockTab label="ROI options" h="h-[96px]"><div className="flex h-[15px] w-[15px] shrink-0 items-center justify-center rounded-[2px] border border-[#25c5da] bg-[#eaac1a]"><svg width="11" height="11" viewBox="0 0 11 11" stroke="#151515" strokeWidth="1.600"><path d="M1 1l9 9M10 1L1 10" /><path d="M7 7l3 3" strokeWidth="3" /></svg></div></DockTab>
      <DockTab h="h-[35px]"><svg width="24" height="24" viewBox="0 0 24 24"><path d="M1 21l7-4h15l-6 4z" fill="#3c78d8" /><path d="M1 17.500l7-5h15l-6 5z" fill="#1c4587" /><path d="M1 14l7-5h15l-6 5z" fill="#0b2350" /><path d="M1 10.500l8-8h14l-7 8z" fill="#d0d0d0" /></svg></DockTab>
      <DockTab h="h-[35px]"><svg width="24" height="24" viewBox="0 0 24 24"><path d="M7 1h8v11h5l-9 11L2 12h5z" fill="#4a6268" stroke="#e6e6e6" strokeDasharray="2 1" /><ellipse cx="17.500" cy="19" rx="5.500" ry="4.500" fill="#4a6268" stroke="#b5c4c6" /><path d="M12.500 19h10M17.500 15v8" stroke="#9db0b3" /></svg></DockTab>
      <DockTab h="h-[35px]"><svg width="24" height="24" viewBox="0 0 24 24"><rect x="1.500" y="1.500" width="21" height="7" rx="2" fill="#6d9399" stroke="#c8d2d4" /><path d="M12 2h5v6h-5z" fill="#4b6b72" /><path d="M17 2h4v6h-4z" fill="#2f474d" /><rect x="2" y="12" width="21" height="12" fill="#fff" /><path d="M4 20c4-6 5-7 9-3l8 4" stroke="#2f474d" strokeWidth="1.300" fill="none" /><path d="M3 13v10h19" stroke="#333" strokeDasharray="1 1" fill="none" /></svg></DockTab>
      <DockTab h="h-[35px]"><svg width="24" height="24" viewBox="0 0 24 24"><path d="M0 0h13C3 6 5 18 13 24H0z" fill="#4a666c" /><path d="M13 0C3 6 5 18 13 24" fill="none" stroke="#f0f0f0" strokeWidth="1.200" strokeDasharray="2 1" /><path d="M8 10h7V6l7 6-7 6v-4H8z" fill="#4a666c" stroke="#dfe6e7" /></svg></DockTab>
      <DockTab h="h-[35px]"><svg width="24" height="24" viewBox="0 0 24 24"><path d="M0 7.500h6.500V1L23 12 6.500 23v-6.500H0z" fill="#4a666c" stroke="#d2dcdd" strokeDasharray="2 1" /><path d="M8 15l3-3h6l-3 3z" fill="#3c78d8" /><path d="M8 12.500l3-3h6l-3 3z" fill="#0b2350" /><path d="M8 11l3-3h6l-3 3z" fill="#eee" /></svg></DockTab>
      <DockTab h="h-[35px]"><svg width="24" height="24" viewBox="0 0 24 24"><path d="M24 0H14C3 4 3 20 14 24h10z" fill="#4a666c" /><path d="M14 0C3 4 3 20 14 24" fill="none" stroke="#f0f0f0" strokeWidth="1.300" strokeDasharray="2 1" /><path d="M9 9.500h8V6l6 6-6 6v-3.500H9z" fill="#f4f4f4" /></svg></DockTab>
      <div className="flex h-[35px] w-[33px] shrink-0 flex-col items-center justify-end border-x border-t border-[#505050] pb-[5px]"><svg width="24" height="24" viewBox="0 0 24 24"><rect x="1" y="1" width="22" height="22" rx="3" fill="#4a666c" stroke="#cfd8da" strokeDasharray="2 1" /><rect x="4" y="2" width="17" height="9" rx="3" fill="#e4e4e4" /><path d="M6.500 4.500l1-.5v5M11 5.500h2.500M12.200 4v3M16 4.500h2.500v2l-2.500 2h3" stroke="#111" strokeWidth="1.200" fill="none" /><path d="M4 15h4v2H4zM10 15h4v2h-4zM16 15h4v2h-4zM4 18.500h4v2H4zM10 18.500h4v2h-4zM16 18.500h4v2h-4z" fill="#dcdcf6" /></svg></div>
    </div>
  );
}

function ScpDock() {
  return (
    <section className="flex w-[530px] shrink-0 flex-col">
      <div className="flex h-[22px] items-center pr-[4px] text-[12px] tracking-[-0.2px] text-[#a9a9a9]"><span className="ml-[231px] pt-px">SCP Dock</span><div className="mb-[6px] ml-auto"><CloseBox /></div></div>
      <div className="flex h-[640px] gap-[11px] pt-[6px] pl-[17px]">
        <DockTabs />
        <div className="flex w-[449px] shrink-0 flex-col pt-[10px]">
          <div className="flex h-[27px] items-center gap-[6px]">
            <SqBtn><path d="M0 6l4 2v13H0z" fill="#f2f200" /><path d="M4 7h13v15H2z" fill="#6f7200" /><rect x="8.500" y="1.500" width="13.500" height="17" fill="#35c46d" stroke="#1a1a1a" /></SqBtn>
            <SqBtn><rect x="3" y="1" width="18" height="21" fill="#f4f4f4" /><circle cx="17" cy="7" r="4.500" fill="#fff200" stroke="#b5ab00" /></SqBtn>
            <div className="flex h-[22px] flex-1 items-center border border-[#505050] bg-[#2e2e2e] pt-px pl-[3px] text-[11px] tracking-[-0.22px] text-[#5c5c5c]">E:/Teaching/GIS/classification/train.scpx</div>
            <SqBtn><rect x="1.500" y="1.500" width="19" height="18" fill="#f4f4f4" /><rect x="10" y="11" width="13" height="12" fill="#f1d3bd" /><path d="M13.500 14l6 6M19.500 14l-6 6" stroke="#e32222" strokeWidth="2" /></SqBtn>
          </div>
          <div className="mt-[6px] flex h-[15px] items-center bg-[#575757] pl-[7px] text-[11px] font-bold tracking-[0.12px] text-white">ROI &amp; Signature list (band set 1)</div>
          <div className="mt-[6px] flex h-[22px] items-center border border-[#505050] bg-[#1f1f1f] pt-px pl-[3px] text-[11px] text-[#5c5c5c]">Filter</div>
          <div className="mt-[6px] flex gap-[6px]">
            <div className="flex w-[27px] flex-col gap-[6px] pt-[70px]">
              <SqBtn>{bigChart}<path d="M2 12c4 0 3-9 8-9 4 0 5 5 11 7" stroke="#38a85a" strokeWidth="2" /><path d="M3 16c4 0 4-7 8-8 3 0 3 4 6 4" stroke="#e23434" strokeWidth="2" /><rect x="9" y="10" width="14" height="13" rx="2" fill="#4a666c" /><path d="M16 12.500v8M12 16.500h8" stroke="#fff" strokeWidth="2.400" /></SqBtn>
              <SqBtn>{bigChart}<rect x="9" y="3" width="13" height="18" fill="#bfe2b2" stroke="#4f6b48" /><path d="M14 7.500l3.500 4.500-3.500 4.500" stroke="#14721c" strokeWidth="2" /></SqBtn>
              <SqBtn><rect x="1" y="1" width="21" height="21" rx="3" fill="#4a666c" stroke="#dfe7e8" strokeWidth="1.500" /><rect x="4" y="9.500" width="15" height="4" fill="#f1effc" /></SqBtn>
              <div className="h-[65px]" />
              <SqBtn>{bigChart}<path d="M3 21C10 13 7 3 23 1" stroke="#3c6fb0" strokeWidth="3.500" /><path d="M3 21C10 13 7 3 23 1" stroke="#0d2c55" strokeWidth="1" /><path d="M5 21c9-2 7-10 17-11" stroke="#2d1d5e" strokeWidth="2.500" /></SqBtn>
              <SqBtn>{bigChart}<path d="M6 7h4v6H5zM11 4l3-1v8l-3 1z" fill="#6b78cf" /><path d="M16 2h4l-1 8h-4z" fill="#5a5f88" /><path d="M5 17l8-3 8-1M7 16l2 2" stroke="#9a9aaa" strokeWidth="1.500" /></SqBtn>
              <div className="h-[64px]" />
              <SqBtn><rect x=".5" y=".5" width="22" height="22" rx="3" fill="#7da0a5" stroke="#eee" /><path d="M2 9v13h20" stroke="#111" strokeWidth="2" strokeDasharray="2 1" /><path d="M3 20c2-8 5-7 8-3l8 4" stroke="#1586e6" strokeWidth="3" /><path d="M11 1h6v9h4.500L14 18 7 10h4z" fill="#3d2c4c" stroke="#eee" /></SqBtn>
              <SqBtn><rect x=".5" y=".5" width="22" height="22" rx="3" fill="#7da0a5" stroke="#eee" /><path d="M2 7v15h20" stroke="#111" strokeWidth="2" strokeDasharray="2 1" /><path d="M3 20c2-7 4-7 8-5" stroke="#f2c31c" strokeWidth="3" /><path d="M3 17c2-5 4-5 8-5" stroke="#d22" strokeWidth="1.500" /><path d="M11.500 20v-9H6.500L14.500 1.500 22 11h-4.500v9z" fill="#c01408" stroke="#eee" /></SqBtn>
            </div>
            <SignatureTable />
          </div>
          <div className="mt-[6px] flex flex-col gap-[4px]">
            <IdRow label="MC ID" value="2" nameLabel="MC Name" name="built" />
            <IdRow label="C ID" value="5" nameLabel="C Name" name="ind" />
          </div>
          <div className="mt-[6px] flex h-[27px] items-center text-[11px] text-[#a9a9a9]">
            <SqBtn><rect x=".5" y=".5" width="22" height="22" rx="2" fill="#eaac1a" stroke="#25d0ea" /><path d="M2 2l4 1c5-3 13-1 15 7l-5 0c-2-3-4-3-6-2l1 3-9-2z" fill="#0a0ae8" stroke="#04047a" strokeWidth=".6" /><rect x="12.500" y="13" width="9.500" height="9.500" rx="1" fill="#f20d0d" stroke="#ffd9b0" strokeWidth=".6" /></SqBtn>
            <div className="ml-[6px]"><SqBtn dim><rect x=".5" y=".5" width="22" height="22" rx="2" fill="#514e44" stroke="#4d5658" /><path d="M21 2l-4 1C12 0 4 2 2 10l5 0c2-3 4-3 6-2l-1 3 9-2z" fill="#424250" /><rect x="12.500" y="13" width="9.500" height="9.500" rx="1" fill="#3b4838" /></SqBtn></div>
            <Check className="ml-[208px] h-[18px] w-[18px]" /><span className="w-[59px] pt-px pl-[6px] tracking-[-0.2px]">Autosave</span>
            <Check /><span className="w-[59px] pt-px pl-[5px] tracking-[-0.1px]">Signature</span>
            <SqBtn><rect x="1" y="1" width="21" height="8.500" rx="1" fill="#c9c9c9" stroke="#222" /><path d="M4 4h15M4 6.500h15" stroke="#777" /><rect x="1" y="10.500" width="21" height="11.500" fill="#b00808" stroke="#222" /><path d="M7 18h7v4H7z" fill="#ddd" /><rect x="13" y="12.500" width="9.500" height="10" fill="#eaac1a" stroke="#25b0c4" strokeWidth=".7" /></SqBtn>
          </div>
        </div>
      </div>
      <div className="flex h-[24px] pl-[8px] text-[11px] tracking-[-0.08px] text-[#a9a9a9]">
        <div className="flex h-[24px] w-[79px] items-center justify-center border-x border-b border-[#505050]">SCP Dock</div>
        <div className="flex h-[18px] w-[91px] items-center justify-center border-r border-b border-[#505050] pt-px pr-[2px]">Search QMS</div>
        <div className="flex h-[18px] w-[95px] items-center justify-center border-r border-b border-[#505050] pt-px pr-px">Layer Styling</div>
        <div className="flex h-[18px] w-[125px] items-center justify-center border-r border-b border-[#505050] pt-px pr-px">Processing Toolbox</div>
        <div className="flex h-[18px] w-[116px] items-center justify-center border-r border-b border-[#505050] pt-px">NextGIS Connect</div>
      </div>
    </section>
  );
}

/* ------------------------------------------------------------------ */
/* Status bar                                                          */
/* ------------------------------------------------------------------ */

function StatusBar() {
  return (
    <footer className="flex h-[31px] items-center border-b border-[#484848] pl-[4px] text-[11px] text-[#a9a9a9]">
      <div className="flex h-[22px] w-[200px] items-center border border-[#505050] bg-[#1f1f1f] text-[#6b6b6b]">
        <svg width="13" height="13" viewBox="0 0 13 13" className="ml-[8px]" fill="none" stroke="#a2a2a2" strokeWidth="1.400"><circle cx="5.500" cy="5.500" r="4.500" /><path d="M9 9l3.500 3.500" /></svg>
        <span className="ml-[8px] pt-[2px]">Type to locate (Ctrl+K)</span>
      </div>
      <span className="ml-[588px] w-[58px] pt-[2px] whitespace-nowrap">Coordinate</span>
      <div className="flex h-[21px] w-[100px] shrink-0 items-center border border-[#505050] bg-[#1f1f1f] pt-px pl-[6px] tracking-[-0.15px] whitespace-nowrap text-[#e4e4e4]">508408, 3946958</div>
      <div className="ml-[4px]"><Ic n="coord" /></div>
      <span className="ml-[14px] w-[30px] pt-[2px] tracking-[-0.2px]">Scale</span>
      <div className="flex h-[21px] w-[79px] shrink-0 border border-[#505050] bg-[#1f1f1f] py-px pr-[2px] pl-px text-[#e4e4e4]"><span className="flex flex-1 items-center pt-px pl-[3px]">1:11208</span><Down className="w-[16px] bg-[#484848]" /></div>
      <svg width="13" height="16" viewBox="0 0 13 16" className="ml-[10px] shrink-0"><path d="M3.500 8V4.500a3 3 0 0 1 6 0V8" stroke="#c4c4c4" strokeWidth="1.800" fill="none" /><rect x="1" y="7.500" width="11" height="8" rx="1" fill="#7b7b7b" /></svg>
      <span className="ml-[9px] w-[50px] pt-[2px] tracking-[-0.3px]">Magnifier</span>
      <Field value="100%" className="h-[20px] w-[82px]" />
      <span className="ml-[9px] w-[53px] pt-[2px] tracking-[-0.2px]">Rotation</span>
      <Field value=" 0.0 °" className="h-[20px] w-[82px]" />
      <Check className="ml-[6px] h-[18px] w-[17px]" />
      <span className="ml-[5px] w-[49px] pt-[2px] tracking-[-0.2px]">Render</span>
      <svg width="15" height="15" viewBox="0 0 15 15" className="shrink-0"><circle cx="7.500" cy="7" r="6.300" fill="#c6c6c6" /><path d="M1.500 7h12M7.500 1v12M3 3.500h9M3 10.500h9M7.500 1c-4 4-4 8 0 12M7.500 1c4 4 4 8 0 12" stroke="#5c5c5c" strokeWidth=".6" fill="none" /></svg>
      <span className="ml-px w-[84px] pt-[2px] tracking-[-0.25px]">EPSG:32639</span>
      <svg width="16" height="15" viewBox="0 0 16 15" className="shrink-0"><path d="M8 0c10 0 10 11 4 12l1 3-4-2.500C-2.500 13-2 0 8 0z" fill="#747474" /><path d="M4 6.500h1.500M7.300 6.500h1.500M10.500 6.500H12" stroke="#efefef" strokeWidth="1.500" /></svg>
    </footer>
  );
}

export default function App() {
  return (
    <div className="flex h-[853px] w-[1600px] flex-col overflow-hidden bg-[#323232] font-['Open_Sans','Noto_Sans',sans-serif] leading-[14px]">
      <TitleBar />
      <MenuBar />
      <Toolbars />
      <main className="flex h-[687px] shrink-0">
        <SideToolbar />
        <LayersPanel />
        <section className="mt-[3px] h-[682px] w-[779px] shrink-0 bg-white pt-[118px] pl-[18px]"><RasterMap /></section>
        <ScpDock />
      </main>
      <StatusBar />
    </div>
  );
}
